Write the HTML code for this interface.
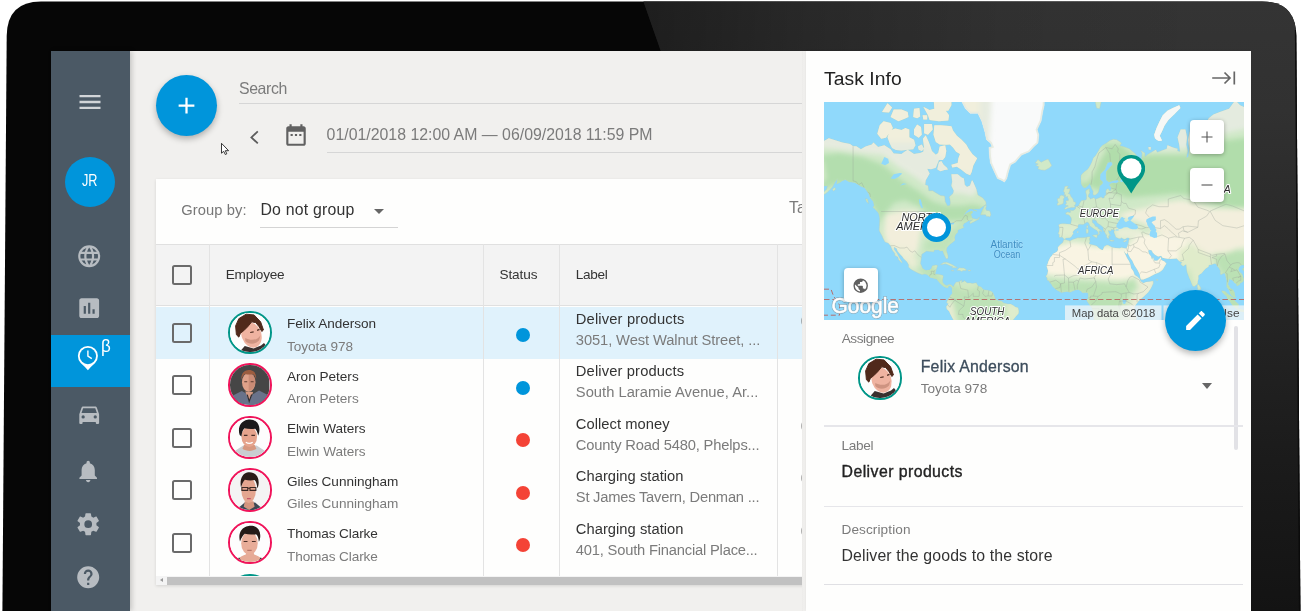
<!DOCTYPE html>
<html lang="en"><head><meta charset="utf-8"><title>Task Info</title>
<style>
html,body{margin:0;padding:0;background:#fff;}
body{width:1303px;height:611px;overflow:hidden;position:relative;font-family:"Liberation Sans",sans-serif;}
.a{position:absolute;}
.t{position:absolute;white-space:nowrap;line-height:1;}
.ic{position:absolute;display:block;}
.cb{position:absolute;width:15.8px;height:15.8px;border:2px solid #6a6a6a;border-radius:2.5px;}
.vl{position:absolute;width:1px;background:#e3e3e3;}
.av{position:absolute;width:39.4px;height:39.4px;border-radius:50%;border:2.500px solid #f0145a;overflow:hidden;background:#fff;}
.av svg{width:100%;height:100%;}
.dot{position:absolute;width:14px;height:14px;border-radius:50%;}
</style></head><body>
<div id="root" style="position:absolute;left:0;top:0;width:1303px;height:611px;overflow:hidden;will-change:transform;">

<svg class="ic" style="left:0;top:0;width:1303px;height:611px" viewBox="0 0 1303 611">
<defs><clipPath id="fr"><path d="M2.400 612L6.700 36Q7 1.400 41 1.400H1262Q1296 1.400 1296.300 36L1300.400 612Z"/></clipPath>
<linearGradient id="gv" x1="0" y1="0" x2="0" y2="1"><stop offset="0" stop-color="#343434"/><stop offset=".18" stop-color="#313131"/><stop offset=".45" stop-color="#272727"/><stop offset=".75" stop-color="#1b1b1b"/><stop offset="1" stop-color="#131313"/></linearGradient>
<linearGradient id="gh" gradientUnits="userSpaceOnUse" x1="643" y1="0" x2="1210" y2="0"><stop offset="0" stop-color="#000" stop-opacity=".42"/><stop offset=".29" stop-color="#000" stop-opacity=".22"/><stop offset=".64" stop-color="#000" stop-opacity=".06"/><stop offset="1" stop-color="#000" stop-opacity="0"/></linearGradient></defs>
<g clip-path="url(#fr)"><rect width="1303" height="612" fill="#060606"/><path d="M643 0H1303V612H857Z" fill="url(#gv)"/><path d="M643 0H1303V612H857Z" fill="url(#gh)"/><path d="M1295.700 30L1299.800 612" stroke="#0b0b0b" stroke-width="1.600" fill="none"/></g></svg>
<div class="a" id="screen" style="left:51px;top:51px;width:1200px;height:560px;background:#f1f0ee;overflow:hidden;">
</div>
<div class="a" style="left:51px;top:51px;width:79px;height:560px;background:#4b5965;box-shadow:2px 0 5px rgba(0,0,0,.18);"></div>
<div class="a" style="left:51px;top:335px;width:79px;height:52px;background:#0095db;"></div>
<svg class="ic" style="left:76.30px;top:87.60px;width:28px;height:28px;opacity:0.75;" viewBox="0 0 24 24"><path fill="#fff" d="M3 6h18v2H3zm0 5h18v2H3zm0 5h18v2H3z"/></svg>
<div class="a" style="left:65px;top:156.500px;width:50px;height:50px;border-radius:50%;background:#0095db;"></div>
<span class="t" id="jr" style="left:82.20px;top:172.67px;font-size:15.86px;color:#fff;letter-spacing:0.000px;transform:scaleX(.8);transform-origin:0 0;">JR</span>
<svg class="ic" style="left:75.90px;top:242.80px;width:26.4px;height:26.4px;opacity:0.6;" viewBox="0 0 24 24"><path fill="#fff" d="M16.36 14c.08-.66.14-1.32.14-2s-.06-1.34-.14-2h3.38c.16.64.26 1.31.26 2s-.1 1.36-.26 2m-5.15 5.56c.6-1.11 1.06-2.31 1.38-3.56h2.95a8.03 8.03 0 0 1-4.33 3.56M14.34 14H9.66c-.1-.66-.16-1.32-.16-2s.06-1.35.16-2h4.68c.09.65.16 1.32.16 2s-.07 1.34-.16 2M12 19.96c-.83-1.2-1.5-2.53-1.91-3.96h3.82c-.41 1.43-1.08 2.76-1.91 3.96M8 8H5.08A7.92 7.92 0 0 1 9.4 4.44C8.8 5.55 8.35 6.75 8 8m-2.92 8H8c.35 1.25.8 2.45 1.4 3.56A8 8 0 0 1 5.08 16m-.82-2C4.1 13.36 4 12.69 4 12s.1-1.36.26-2h3.38c-.08.66-.14 1.32-.14 2s.06 1.34.14 2M12 4.03c.83 1.2 1.5 2.54 1.91 3.97h-3.82c.41-1.43 1.08-2.77 1.91-3.97M18.92 8h-2.95a15.7 15.7 0 0 0-1.38-3.56c1.84.63 3.37 1.9 4.33 3.56M12 2C6.47 2 2 6.5 2 12a10 10 0 0 0 10 10 10 10 0 0 0 10-10A10 10 0 0 0 12 2"/></svg>
<svg class="ic" style="left:75.90px;top:295.20px;width:26.4px;height:26.4px;opacity:0.6;" viewBox="0 0 24 24"><path fill="#fff" d="M19 3H5c-1.1 0-2 .9-2 2v14c0 1.1.9 2 2 2h14c1.1 0 2-.9 2-2V5c0-1.1-.9-2-2-2M9 17H7v-7h2zm4 0h-2V7h2zm4 0h-2v-4h2z"/></svg>
<svg class="ic" style="left:74px;top:342px;width:30px;height:32px" viewBox="0 0 30 32"><path d="M6.700 20.900A10 10 0 1 1 21.100 20.900Q17 24.500 13.900 28.200Q10.800 24.500 6.700 20.900Z" fill="#fff"/><circle cx="13.900" cy="14" r="8.200" fill="#0095db"/><path d="M13.900 8.600v5.600l3.900 2.500" stroke="#fff" stroke-width="1.400" fill="none"/></svg>
<span class="t" id="beta" style="left:101.10px;top:336.68px;font-size:18.33px;color:#fff;letter-spacing:0.000px;transform:scaleX(.93);transform-origin:0 0;">β</span>
<svg class="ic" style="left:75.90px;top:400.60px;width:26.4px;height:26.4px;opacity:0.6;" viewBox="0 0 24 24"><path fill="#fff" d="m5 11 1.5-4.5h11L19 11m-1.5 5a1.5 1.5 0 0 1-1.5-1.5 1.5 1.5 0 0 1 1.5-1.5 1.5 1.5 0 0 1 1.5 1.5 1.5 1.5 0 0 1-1.5 1.5m-11 0A1.5 1.5 0 0 1 5 14.5 1.5 1.5 0 0 1 6.5 13 1.5 1.5 0 0 1 8 14.5 1.5 1.5 0 0 1 6.5 16M18.92 6c-.2-.58-.76-1-1.42-1h-11c-.66 0-1.22.42-1.42 1L3 12v8a1 1 0 0 0 1 1h1a1 1 0 0 0 1-1v-1h12v1a1 1 0 0 0 1 1h1a1 1 0 0 0 1-1v-8z"/></svg>
<svg class="ic" style="left:75.40px;top:458.30px;width:26.4px;height:26.4px;opacity:0.6;" viewBox="0 0 24 24"><path fill="#fff" d="M12 22c1.100 0 2-.9 2-2h-4c0 1.100.89 2 2 2zm6-6v-5c0-3.070-1.640-5.640-4.500-6.320V4c0-.83-.67-1.500-1.500-1.500s-1.500.67-1.500 1.500v.68C7.630 5.360 6 7.920 6 11v5l-2 2v1h16v-1l-2-2z"/></svg>
<svg class="ic" style="left:75.40px;top:511.00px;width:26.4px;height:26.4px;opacity:0.6;" viewBox="0 0 24 24"><path fill="#fff" d="M12 15.5A3.5 3.5 0 0 1 8.5 12 3.5 3.5 0 0 1 12 8.5a3.5 3.5 0 0 1 3.5 3.5 3.5 3.5 0 0 1-3.5 3.5m7.43-2.53c.04-.32.07-.64.07-.97s-.03-.66-.07-1l2.11-1.63c.19-.15.24-.42.12-.64l-2-3.46c-.12-.22-.39-.31-.61-.22l-2.49 1c-.52-.39-1.06-.73-1.69-.98l-.37-2.65A.506.506 0 0 0 14 2h-4c-.25 0-.46.18-.5.42l-.37 2.65c-.63.25-1.17.59-1.69.98l-2.49-1c-.22-.09-.49 0-.61.22l-2 3.46c-.13.22-.07.49.12.64L4.57 11c-.04.34-.07.67-.07 1s.03.65.07.97l-2.11 1.66c-.19.15-.25.42-.12.64l2 3.46c.12.22.39.3.61.22l2.49-1.01c.52.4 1.06.74 1.69.99l.37 2.65c.04.24.25.42.5.42h4c.25 0 .46-.18.5-.42l.37-2.65c.63-.26 1.17-.59 1.69-.99l2.49 1.01c.22.08.49 0 .61-.22l2-3.46c.12-.22.07-.49-.12-.64z"/></svg>
<svg class="ic" style="left:75.40px;top:563.60px;width:26.4px;height:26.4px;opacity:0.6;" viewBox="0 0 24 24"><path fill="#fff" d="m15.07 11.25-.9.92C13.45 12.89 13 13.5 13 15h-2v-.5c0-1.11.45-2.11 1.17-2.83l1.24-1.26c.37-.36.59-.86.59-1.41a2 2 0 0 0-2-2 2 2 0 0 0-2 2H8a4 4 0 0 1 4-4 4 4 0 0 1 4 4 3.2 3.2 0 0 1-.93 2.25M13 19h-2v-2h2M12 2A10 10 0 0 0 2 12a10 10 0 0 0 10 10 10 10 0 0 0 10-10c0-5.53-4.5-10-10-10"/></svg>
<div class="a" style="left:156px;top:75px;width:61px;height:61px;border-radius:50%;background:#0095db;box-shadow:0 3px 6px rgba(0,0,0,.28);"></div>
<svg class="ic" style="left:173.20px;top:92.10px;width:27px;height:27px;opacity:1;" viewBox="0 0 24 24"><path fill="#fff" d="M19 13h-6v6h-2v-6H5v-2h6V5h2v6h6z"/></svg>
<span class="t" id="search" style="left:239.00px;top:81.27px;font-size:15.86px;color:#7b7b7b;letter-spacing:-0.392px;">Search</span>
<div class="a" style="left:239px;top:103px;width:570px;height:1px;background:#d6d6d6;"></div>
<svg class="ic" style="left:246px;top:127px;width:16px;height:21px" viewBox="246 127 16 21"><path d="M257.800 131.400L251.400 137.400L257.800 143.400" fill="none" stroke="#5c5c5c" stroke-width="1.800"/></svg>
<svg class="ic" style="left:282.90px;top:122.40px;width:26px;height:26px;opacity:1;" viewBox="0 0 24 24"><path fill="#616161" d="M9 11H7v2h2v-2zm4 0h-2v2h2v-2zm4 0h-2v2h2v-2zm2-7h-1V2h-2v2H8V2H6v2H5c-1.110 0-1.990.9-1.990 2L3 20c0 1.100.89 2 2 2h14c1.100 0 2-.9 2-2V6c0-1.100-.9-2-2-2zm0 16H5V9h14v11z"/></svg>
<span class="t" id="date" style="left:326.60px;top:126.87px;font-size:15.86px;color:#7b7b7b;letter-spacing:0.001px;">01/01/2018 12:00 AM — 06/09/2018 11:59 PM</span>
<div class="a" style="left:327px;top:152px;width:480px;height:1px;background:#d6d6d6;"></div>
<svg class="ic" style="left:219px;top:141px;width:12px;height:16px" viewBox="219 141 12 16"><path d="M221.500 143.300V153.200L223.700 151.300L225.300 154.500L226.800 153.800L225.300 150.700H228.600Z" fill="#fff" stroke="#222" stroke-width=".9" stroke-linejoin="round"/></svg>
<div class="a" style="left:156px;top:178.500px;width:650px;height:406px;background:#fefefd;box-shadow:0 1px 3px rgba(0,0,0,.12);"></div>
<span class="t" id="groupby" style="left:181.30px;top:203.03px;font-size:14.73px;color:#777;letter-spacing:0.071px;">Group by:</span>
<span class="t" id="dng" style="left:260.40px;top:202.07px;font-size:15.86px;color:#333;letter-spacing:0.210px;">Do not group</span>
<svg class="ic" style="left:367.00px;top:198.50px;width:24px;height:24px;opacity:1;" viewBox="0 0 24 24"><path fill="#666" d="m7 10 5 5 5-5z"/></svg>
<div class="a" style="left:260px;top:226.500px;width:138px;height:1px;background:#d4d4d4;"></div>
<span class="t" id="ta" style="left:789.00px;top:200.47px;font-size:15.86px;color:#7b7b7b;letter-spacing:0.000px;">Ta</span>
<div class="a" style="left:156px;top:243.500px;width:650px;height:62.500px;background:#f3f3f3;border-top:1px solid #e0e0e0;border-bottom:1px solid #e0e0e0;box-sizing:border-box;"></div>
<div class="a" style="left:156px;top:306.500px;width:650px;height:52.500px;background:#e0f2fc;"></div>
<div class="vl" style="left:208.7px;top:244px;height:332px;"></div>
<div class="vl" style="left:483.3px;top:244px;height:332px;"></div>
<div class="vl" style="left:558.9px;top:244px;height:332px;"></div>
<div class="vl" style="left:777.2px;top:244px;height:332px;"></div>
<div class="cb" style="left:172.200px;top:265px;"></div>
<span class="t" id="h_emp" style="left:225.70px;top:267.79px;font-size:13.6px;color:#333;letter-spacing:-0.208px;">Employee</span>
<span class="t" id="h_status" style="left:499.50px;top:267.79px;font-size:13.6px;color:#333;letter-spacing:-0.110px;">Status</span>
<span class="t" id="h_label" style="left:575.70px;top:267.79px;font-size:13.6px;color:#333;letter-spacing:-0.315px;">Label</span>
<div class="cb" style="left:172.200px;top:322.80px;"></div>
<div class="av" style="left:228.300px;top:310.90px;border-color:#009688;"><svg viewBox="0 0 40 40" width="40" height="40" style="position:absolute;left:0;top:0"><rect width="40" height="40" fill="#fdfdfd"/><path d="M11 38L15 33.500L24 36L31.500 33L34.500 30.500L37 33.500L31 41H15Z" fill="#3a302f"/><ellipse cx="21.800" cy="22.300" rx="10" ry="13.200" transform="rotate(-20 21.800 22.300)" fill="#efb3a1"/><path d="M15.500 28.500C19 32 25 32.500 29.500 28L31 22.500C28.500 27 22 29 15.500 25.500Z" fill="#c08673" opacity=".7"/><path d="M6.500 22.100L5.700 13.100L9 5.700L16.400 1.200L24.500 2L31.100 9L34 17.200L32.300 18.800L29.500 13.900L26.200 9.800L22.100 9L18 13.900L13.900 18L10.600 20.500L9 24.500Z" fill="#50291b" stroke="#50291b" stroke-width="1" stroke-linejoin="round"/><path d="M20.500 19.800L24 19.200M27.500 17.600L30 16.600" stroke="#4e2d22" stroke-width="1.200"/></svg>
</div>
<span class="t" id="n1_0" style="left:287.00px;top:317.49px;font-size:13.6px;color:#333;letter-spacing:-0.072px;">Felix Anderson</span>
<span class="t" id="n2_0" style="left:287.00px;top:339.99px;font-size:13.6px;color:#7b7b7b;letter-spacing:-0.058px;">Toyota 978</span>
<div class="dot" style="left:516.400px;top:328.20px;background:#0095db;"></div>
<span class="t" id="l1_0" style="left:575.80px;top:311.73px;font-size:14.73px;color:#333;letter-spacing:0.150px;">Deliver products</span>
<span class="t" id="l2_0" style="left:575.80px;top:332.83px;font-size:14.73px;color:#7b7b7b;letter-spacing:-0.102px;">3051, West Walnut Street, ...</span>
<span class="t" id="par_0" style="left:800.50px;top:312.83px;font-size:14.73px;color:#7b7b7b;letter-spacing:0.000px;">(</span>
<div class="cb" style="left:172.200px;top:375.30px;"></div>
<div class="av" style="left:228.300px;top:363.40px;border-color:#f0145a;">
<svg viewBox="0 0 40 40" width="40" height="40" style="position:absolute;left:0;top:0"><rect width="40" height="40" fill="#464646"/><path d="M3 31l9-4.500 4.500 2.500 3 7 4-6.500 6-3.500 8 4v11H3z" fill="#69728a"/><path d="M15.500 27l8 .5-4 10z" fill="#d59a83"/><path d="M17.500 30l2 7 2.500-7" fill="none" stroke="#2c2c33" stroke-width="1.200"/><ellipse cx="19" cy="17.500" rx="6.800" ry="9.600" fill="#dfa189"/><path d="M19 8v18c3.500 0 6.800-4 6.800-9S23 8 19 8z" fill="#b97c66" opacity=".55"/><path d="M11.600 15c-.6-5 2-9.500 7.500-9.800 5-.2 8 3.500 7.400 9.300-.6-2.500-1.600-4.300-3.200-5.200-2.400.6-5.500.5-8.200-.2-1.700 1.300-2.800 3.200-3.500 5.900z" fill="#9c5d40"/><path d="M14.500 17h3M21 17h3" stroke="#5b3a30" stroke-width="1"/></svg>
</div>
<span class="t" id="n1_1" style="left:287.00px;top:369.99px;font-size:13.6px;color:#333;letter-spacing:-0.009px;">Aron Peters</span>
<span class="t" id="n2_1" style="left:287.00px;top:392.49px;font-size:13.6px;color:#7b7b7b;letter-spacing:-0.009px;">Aron Peters</span>
<div class="dot" style="left:516.400px;top:380.70px;background:#0095db;"></div>
<span class="t" id="l1_1" style="left:575.80px;top:364.23px;font-size:14.73px;color:#333;letter-spacing:0.136px;">Deliver products</span>
<span class="t" id="l2_1" style="left:575.80px;top:385.33px;font-size:14.73px;color:#7b7b7b;letter-spacing:0.015px;">South Laramie Avenue, Ar...</span>
<div class="cb" style="left:172.200px;top:427.80px;"></div>
<div class="av" style="left:228.300px;top:415.90px;border-color:#f0145a;">
<svg viewBox="0 0 40 40" width="40" height="40" style="position:absolute;left:0;top:0"><rect width="40" height="40" fill="#fdfdfd"/><path d="M4 34l9.500-6h13.500l9.500 6v7H4z" fill="#c9cdd1"/><g transform="translate(20 20) scale(1.13) translate(-20 -19.5)"><path d="M15 26h9.500l1.500 3.500c-3 2.500-9 2.500-12.500 0z" fill="#d79880"/><ellipse cx="19.600" cy="18.600" rx="7" ry="9.300" fill="#e6a48d"/><path d="M11 17c-2-6 .5-12.500 7-13.700 6.500-1.200 11.500 3 10.700 10.200-.2 1.800-.6 3.300-1.200 4.200-.3-2.800-1.200-5-2.600-6.300-3 .6-6.500.4-9.500-.4-1.500 1.300-2.500 3.600-2.800 7.500z" fill="#1b1a1b"/><path d="M14.800 17.400h3.200M21.500 17.400h3.200" stroke="#4a2f28" stroke-width="1"/><path d="M16.500 23.500c2 1.300 4.200 1.300 6.200 0" stroke="#fff" stroke-width="1.100" fill="none"/></g></svg>
</div>
<span class="t" id="n1_2" style="left:287.00px;top:422.49px;font-size:13.6px;color:#333;letter-spacing:-0.020px;">Elwin Waters</span>
<span class="t" id="n2_2" style="left:287.00px;top:444.99px;font-size:13.6px;color:#7b7b7b;letter-spacing:-0.020px;">Elwin Waters</span>
<div class="dot" style="left:516.400px;top:433.20px;background:#f44336;"></div>
<span class="t" id="l1_2" style="left:575.80px;top:416.73px;font-size:14.73px;color:#333;letter-spacing:0.036px;">Collect money</span>
<span class="t" id="l2_2" style="left:575.80px;top:437.83px;font-size:14.73px;color:#7b7b7b;letter-spacing:-0.173px;">County Road 5480, Phelps...</span>
<span class="t" id="par_2" style="left:800.50px;top:417.83px;font-size:14.73px;color:#7b7b7b;letter-spacing:0.000px;">(</span>
<div class="cb" style="left:172.200px;top:480.30px;"></div>
<div class="av" style="left:228.300px;top:468.40px;border-color:#f0145a;">
<svg viewBox="0 0 40 40" width="40" height="40" style="position:absolute;left:0;top:0"><rect width="40" height="40" fill="#f4f4f4"/><path d="M9 38l6-5h10.500l6 5v3H9z" fill="#3c4854"/><g transform="translate(20 20) scale(1.1) translate(-20 -19.3)"><path d="M15.500 30h8l1 5-5 3-5-3z" fill="#d3957f"/><ellipse cx="19" cy="19.500" rx="6.700" ry="12" fill="#e4a690"/><path d="M12 17.500c-1.500-7 1-13.500 6.500-14.300 6-.8 10.500 3.600 9.700 11-.2 1.700-.6 3-1.200 3.800-.2-3.500-1-6.300-2.500-7.600-3 .5-6 .4-9-.3-1.500 1.500-2.500 3.800-3.500 7.400z" fill="#2a1c17"/><path d="M12.800 17.300h5.400v2.600h-5.400zM20.300 17.300h5.400v2.600h-5.400zM18.200 18h2.100" stroke="#3b2a25" stroke-width="1" fill="none"/><path d="M17.500 27.500h3.500" stroke="#c4566a" stroke-width="1.100"/></g></svg>
</div>
<span class="t" id="n1_3" style="left:287.00px;top:474.99px;font-size:13.6px;color:#333;letter-spacing:-0.029px;">Giles Cunningham</span>
<span class="t" id="n2_3" style="left:287.00px;top:497.49px;font-size:13.6px;color:#7b7b7b;letter-spacing:-0.029px;">Giles Cunningham</span>
<div class="dot" style="left:516.400px;top:485.70px;background:#f44336;"></div>
<span class="t" id="l1_3" style="left:575.80px;top:469.23px;font-size:14.73px;color:#333;letter-spacing:0.034px;">Charging station</span>
<span class="t" id="l2_3" style="left:575.80px;top:490.33px;font-size:14.73px;color:#7b7b7b;letter-spacing:-0.224px;">St James Tavern, Denman ...</span>
<span class="t" id="par_3" style="left:800.50px;top:470.33px;font-size:14.73px;color:#7b7b7b;letter-spacing:0.000px;">(</span>
<div class="cb" style="left:172.200px;top:532.80px;"></div>
<div class="av" style="left:228.300px;top:520.90px;border-color:#f0145a;">
<svg viewBox="0 0 40 40" width="40" height="40" style="position:absolute;left:0;top:0"><rect width="40" height="40" fill="#fdfdfd"/><path d="M8 37c2-3 5.500-4 8-5l1-4h6.500l1 4c2.500 1 6 2 8 5l-3 4H11z" fill="#e6ab97"/><path d="M8.500 35.500l3.500 5M32 35.500l-3.500 5" stroke="#27201f" stroke-width="1.800"/><g transform="translate(20 20) scale(1.12) translate(-20 -19.5)"><ellipse cx="19.800" cy="20" rx="7.500" ry="10.300" fill="#e8ad99"/><path d="M11.200 18.500c-1.700-6.500.3-13 7.800-14.200 7-1 11.300 3.400 10.500 10.500-.2 1.700-.6 3-1.200 3.800-.2-3-1-5.500-2.500-6.800-3.400.5-7 .4-10.300-.3-1.600 1.300-2.900 3.500-4.300 7z" fill="#241a17"/><path d="M14.500 18.400h3.500M22 18.400h3.500" stroke="#4a2f28" stroke-width="1.100"/><path d="M17.800 26.500h4" stroke="#b9776a" stroke-width="1"/></g></svg>
</div>
<span class="t" id="n1_4" style="left:287.00px;top:527.49px;font-size:13.6px;color:#333;letter-spacing:-0.114px;">Thomas Clarke</span>
<span class="t" id="n2_4" style="left:287.00px;top:549.99px;font-size:13.6px;color:#7b7b7b;letter-spacing:-0.114px;">Thomas Clarke</span>
<div class="dot" style="left:516.400px;top:538.20px;background:#f44336;"></div>
<span class="t" id="l1_4" style="left:575.80px;top:521.73px;font-size:14.73px;color:#333;letter-spacing:0.034px;">Charging station</span>
<span class="t" id="l2_4" style="left:575.80px;top:542.83px;font-size:14.73px;color:#7b7b7b;letter-spacing:-0.195px;">401, South Financial Place...</span>
<span class="t" id="par_4" style="left:800.50px;top:522.83px;font-size:14.73px;color:#7b7b7b;letter-spacing:0.000px;">(</span>
<div class="a" style="left:156px;top:569px;width:650px;height:7px;overflow:hidden;"><div class="av" style="left:72.200px;top:4.500px;border-color:#009688;"></div></div>
<div class="a" style="left:156px;top:576px;width:650px;height:9px;background:#f4f4f4;"></div>
<div class="a" style="left:167px;top:576.500px;width:640px;height:8px;background:#c1c1c1;"></div>
<div class="a" style="left:159.500px;top:578px;width:0;height:0;border:2.500px solid transparent;border-right:3.500px solid #999;border-left:0;"></div>
<div class="a" style="left:802px;top:51px;width:6px;height:560px;background:linear-gradient(90deg,#ecebe9,#f3f2f0 2px);"></div>
<div class="a" id="panel" style="left:806px;top:51px;width:445px;height:560px;background:#fefefd;box-shadow:-1px 0 3px rgba(0,0,0,.05);"></div>
<span class="t" id="taskinfo" style="left:824.00px;top:69.30px;font-size:19.26px;color:#222;letter-spacing:0.082px;">Task Info</span>
<svg class="ic" style="left:1211px;top:70px;width:26px;height:16px" viewBox="0 0 26 16"><path d="M1.200 8H19M13.500 2.500 19 8l-5.500 5.500M23.300 1.600v12.800" stroke="#666" stroke-width="1.700" fill="none"/></svg>
<div class="a" id="map" style="left:824px;top:102px;width:419.500px;height:218px;background:#90d9fb;overflow:hidden;"><svg width="419.5" height="218" viewBox="0 0 419.5 218" style="position:absolute;left:0;top:0;font-family:'Liberation Sans',sans-serif">
<defs><clipPath id="lc"><path d="M418.7 166.8 L420.1 165.6 L422.3 166.0 L421.5 167.6 L419.9 168.6 L418.7 168.1Z M413.2 208.1 L414.6 206.7 L418.4 207.7 L421.5 208.3 L423.8 208.3 L423.8 210.5 L418.4 209.7 L415.1 209.1Z M-13.0 60.6 L-10.6 49.8 L-5.2 44.6 L-3.5 41.0 L4.8 36.2 L12.0 38.6 L18.2 40.5 L26.0 41.9 L29.1 44.2 L32.3 44.2 L36.9 47.2 L41.6 44.6 L47.9 42.4 L49.4 40.5 L54.1 45.1 L60.3 43.3 L66.6 47.2 L69.7 51.5 L77.5 51.9 L80.6 49.8 L83.7 47.7 L90.0 51.9 L96.2 51.1 L99.3 49.8 L100.1 45.5 L98.9 36.7 L101.7 33.3 L104.8 40.0 L106.4 44.6 L107.9 49.0 L111.8 52.7 L114.2 51.1 L115.7 44.6 L121.2 43.3 L122.3 49.0 L121.2 55.1 L118.8 57.9 L114.9 57.9 L113.4 61.7 L111.8 65.7 L107.1 67.2 L103.2 66.8 L105.6 71.6 L101.7 78.2 L101.2 82.8 L104.0 83.7 L104.8 88.7 L108.7 88.7 L111.8 90.7 L116.5 93.5 L120.7 94.0 L121.2 99.6 L123.5 103.9 L125.9 103.4 L126.3 100.9 L125.9 97.0 L125.1 94.9 L129.0 91.6 L129.8 88.7 L127.4 83.7 L128.2 79.8 L127.4 72.3 L133.7 72.3 L137.6 75.6 L139.9 76.6 L140.7 82.8 L143.0 84.9 L146.1 83.4 L147.7 78.8 L148.5 78.5 L152.4 87.3 L153.9 92.9 L158.6 95.7 L161.7 99.6 L162.2 102.2 L160.2 103.7 L155.5 106.7 L149.3 106.7 L145.4 106.7 L142.2 109.5 L139.1 114.2 L143.0 111.0 L147.7 109.1 L148.8 110.0 L146.9 112.4 L148.0 116.0 L150.0 116.7 L153.2 117.2 L155.5 115.1 L154.7 117.2 L150.0 119.8 L146.1 121.8 L145.8 119.8 L148.5 117.8 L144.6 118.7 L142.2 120.2 L139.9 121.5 L138.8 123.7 L139.9 125.6 L137.6 126.4 L133.7 128.1 L133.7 130.3 L131.6 132.3 L130.5 135.3 L131.0 138.2 L129.0 140.1 L125.9 142.3 L122.7 145.7 L122.3 148.4 L124.0 153.7 L124.0 156.3 L122.7 157.0 L121.5 155.5 L119.9 152.0 L118.8 148.8 L116.5 148.9 L114.2 147.7 L110.3 147.9 L109.8 149.8 L107.1 149.6 L102.5 149.1 L97.8 152.3 L97.3 156.3 L96.5 161.5 L98.6 166.5 L101.7 168.6 L105.6 168.0 L107.6 166.5 L108.1 164.0 L111.8 163.0 L113.7 163.5 L112.6 166.5 L111.8 168.9 L111.0 172.2 L114.9 172.4 L118.8 173.3 L119.3 174.6 L118.5 177.8 L118.5 180.2 L120.4 182.6 L122.7 183.7 L125.1 182.6 L127.4 182.9 L128.5 184.2 L129.3 185.0 L131.3 181.0 L132.4 180.1 L135.2 179.8 L137.6 178.0 L137.9 179.4 L137.1 180.4 L139.9 179.4 L139.9 178.5 L142.2 179.9 L143.0 181.0 L146.1 180.9 L148.5 181.5 L152.4 180.7 L152.7 181.8 L154.3 184.2 L157.1 185.0 L159.4 187.7 L163.3 188.3 L167.2 189.2 L168.8 190.8 L170.6 194.7 L171.1 196.7 L172.7 197.8 L173.9 198.7 L177.3 199.1 L179.7 201.1 L183.6 201.9 L186.7 202.0 L189.0 203.3 L191.4 205.0 L194.0 205.8 L194.8 208.9 L194.5 211.6 L192.2 214.1 L190.6 216.0 L189.0 218.0 L188.3 229.4 L130.5 229.4 L130.1 218.8 L128.7 216.4 L126.6 212.4 L125.1 209.2 L122.7 206.9 L122.3 204.5 L123.8 202.8 L124.3 201.4 L122.7 200.9 L123.1 199.1 L124.3 196.7 L125.9 195.2 L126.6 193.6 L128.5 191.6 L128.2 188.9 L128.2 186.1 L126.6 184.2 L124.8 183.7 L123.8 185.9 L122.0 185.4 L119.6 184.5 L116.5 181.8 L115.3 180.2 L112.6 177.0 L109.5 176.2 L106.4 175.4 L103.2 172.5 L100.9 172.0 L97.8 172.5 L93.9 171.1 L90.0 168.9 L86.9 167.3 L84.5 165.0 L84.8 163.1 L83.0 159.8 L79.8 156.7 L78.3 154.6 L75.9 152.0 L73.6 149.3 L72.5 146.2 L70.0 145.1 L70.2 147.5 L72.8 151.1 L75.2 155.5 L77.0 158.6 L78.3 160.3 L77.5 160.8 L74.4 157.5 L73.9 155.1 L70.8 153.4 L70.9 151.6 L68.5 148.4 L66.6 143.8 L64.2 141.0 L61.0 139.9 L58.9 136.1 L58.0 133.7 L56.0 130.3 L55.2 128.5 L55.3 125.2 L55.7 119.8 L55.7 115.8 L54.6 111.0 L52.5 108.8 L49.0 105.2 L50.2 103.4 L49.4 99.6 L46.3 95.7 L44.7 91.6 L40.8 85.8 L36.9 84.3 L34.6 82.8 L30.7 80.4 L25.2 79.8 L21.3 77.6 L18.2 78.8 L15.9 80.4 L12.8 81.9 L13.5 76.6 L11.2 79.8 L9.6 82.8 L8.5 84.9 L5.0 88.7 L1.8 91.6 L-2.1 93.5 L-5.2 94.9 L-8.0 95.4 L-3.6 92.1 L-0.5 90.2 L2.6 87.3 L3.7 83.7 L1.1 84.0 L-3.6 83.7 L-3.6 79.8 L-8.3 77.2 L-9.9 74.0 L-8.3 70.6 L-5.2 69.3 L-2.1 67.5 L-2.1 64.7 L-5.2 64.3 L-9.9 64.7Z M211.2 61.0 L214.0 57.5 L217.1 60.2 L221.0 58.3 L224.1 57.1 L226.3 61.0 L227.7 63.6 L225.7 65.7 L221.0 68.2 L217.1 67.9 L213.8 66.8 L214.8 64.7 L211.7 63.2 L214.3 62.1Z M116.5 162.5 L119.6 160.6 L122.7 160.3 L125.9 161.5 L129.0 163.1 L131.3 164.5 L133.3 165.3 L132.1 165.8 L127.9 165.8 L128.7 164.6 L126.6 164.0 L123.5 162.6 L121.2 161.8 L118.1 162.6Z M133.0 168.3 L135.2 165.8 L137.2 166.0 L139.9 166.1 L142.4 167.8 L141.9 168.6 L139.1 168.6 L137.6 169.4 L136.0 168.6Z M127.0 168.3 L130.1 168.6 L129.0 169.3Z M144.3 168.1 L146.8 168.3 L146.1 169.0 L144.3 168.9Z M153.2 56.3 L149.3 63.6 L147.7 69.9 L146.1 73.3 L142.2 71.6 L136.8 67.2 L132.9 64.7 L128.2 65.4 L127.4 62.8 L133.7 61.0 L134.4 56.3 L136.0 51.9 L132.1 49.8 L129.0 45.5 L125.9 42.4 L122.0 42.8 L115.7 42.4 L111.8 40.0 L109.5 32.8 L110.3 23.2 L116.5 23.2 L122.7 23.8 L127.4 24.3 L129.0 28.6 L132.9 33.8 L137.6 37.7 L142.2 42.4 L144.6 46.8 L148.5 52.3Z M65.8 41.4 L63.5 35.3 L65.8 28.6 L71.3 26.5 L77.5 28.1 L81.4 26.0 L85.3 27.6 L85.3 35.3 L90.0 37.7 L91.5 43.3 L89.2 47.2 L83.7 47.7 L77.5 48.5 L72.0 48.1 L68.1 45.9Z M57.2 36.7 L53.3 31.7 L55.7 23.2 L59.6 19.2 L66.6 20.9 L68.9 26.0 L65.0 31.2 L61.9 35.7Z M66.6 15.0 L69.7 7.4 L77.5 7.4 L83.7 10.0 L84.5 15.0 L80.6 16.8 L74.4 19.2 L71.3 17.4Z M90.0 32.8 L90.0 27.6 L93.1 22.6 L97.0 24.9 L97.8 32.8 L94.7 35.7Z M100.1 22.1 L107.9 22.1 L108.7 27.6 L104.0 32.8 L100.1 31.2Z M93.9 44.6 L97.8 42.4 L100.1 46.8 L97.8 49.0 L94.7 47.7Z M105.6 18.0 L114.9 19.2 L124.3 18.6 L125.1 13.2 L121.2 8.0 L110.3 6.7 L105.6 8.0 L99.3 4.7 L104.0 13.2Z M89.2 15.0 L90.0 6.7 L95.4 6.0 L96.2 14.4 L93.1 16.2Z M98.6 13.2 L103.2 13.2 L103.2 17.4 L99.3 17.4Z M110.3 6.7 L124.3 8.7 L127.4 3.3 L127.4 -66.1 L105.6 -66.1Z M58.0 10.0 L63.5 1.2 L68.1 5.4 L65.0 10.6Z M113.4 66.4 L114.9 60.2 L117.3 59.1 L119.6 62.8 L122.7 65.4 L124.0 67.5 L120.4 67.9 L116.5 69.3 L113.4 67.5Z M156.6 112.8 L157.8 109.5 L158.9 107.1 L160.5 103.7 L162.5 103.2 L161.7 106.7 L162.5 108.4 L165.6 108.8 L166.4 110.7 L166.9 113.1 L165.6 115.1 L164.1 114.2 L162.5 114.4 L161.7 112.8Z M8.1 87.6 L10.4 85.5 L12.0 87.0 L9.6 89.0Z M41.6 96.7 L43.6 97.0 L44.4 101.4 L42.4 99.6Z M148.5 107.4 L152.4 108.6 L152.7 109.3 L149.3 108.1Z M289.3 37.2 L292.8 37.7 L297.5 41.0 L295.9 43.7 L300.6 45.1 L305.3 46.8 L311.5 51.9 L313.1 55.1 L311.5 58.3 L303.7 57.1 L299.8 55.1 L302.9 62.8 L303.7 65.4 L306.8 66.4 L308.4 63.6 L311.5 63.9 L311.5 59.1 L314.6 57.1 L317.7 58.3 L318.1 51.1 L316.6 48.5 L320.9 51.1 L320.9 55.1 L324.0 52.3 L331.8 47.7 L333.3 50.2 L338.0 48.5 L342.7 46.8 L343.5 43.3 L348.9 45.5 L353.6 46.8 L353.6 49.0 L356.0 49.4 L355.2 42.4 L353.6 35.3 L356.7 27.6 L361.4 27.6 L363.0 35.3 L362.2 42.4 L363.8 49.0 L362.2 55.9 L364.5 55.1 L365.3 46.8 L364.2 37.7 L366.1 28.6 L370.8 31.2 L373.9 24.9 L375.5 32.8 L377.0 37.7 L380.1 24.9 L384.8 16.2 L389.5 12.5 L397.3 9.4 L405.1 6.7 L411.3 -1.7 L416.0 3.3 L423.8 6.7 L444.1 10.0 L444.1 197.5 L423.8 163.1 L421.2 163.5 L420.7 165.1 L420.1 163.1 L417.6 163.0 L415.6 164.3 L414.1 167.3 L415.2 169.8 L418.0 172.2 L419.6 177.0 L419.1 179.4 L416.0 181.2 L415.6 182.6 L412.9 184.0 L412.6 181.8 L410.6 180.9 L409.0 178.6 L406.7 177.5 L405.9 176.2 L405.1 177.8 L404.3 180.2 L403.9 182.6 L405.1 184.2 L405.9 186.2 L407.4 186.9 L409.0 188.1 L410.4 190.5 L410.6 193.1 L411.7 195.3 L410.6 195.5 L409.0 194.4 L407.1 193.0 L405.9 190.5 L405.6 188.9 L404.6 187.3 L402.8 185.0 L402.8 181.8 L402.9 178.6 L402.0 175.4 L401.4 172.2 L400.4 170.9 L398.9 171.4 L397.8 172.5 L396.2 172.2 L396.5 168.9 L395.0 166.0 L393.1 164.0 L392.3 161.8 L390.3 161.5 L387.9 162.6 L384.8 163.1 L384.5 164.8 L381.7 166.5 L379.4 168.9 L377.5 171.2 L375.5 172.5 L374.2 173.8 L374.4 176.7 L373.6 179.4 L373.6 181.3 L372.3 182.9 L371.1 183.7 L370.0 184.8 L368.4 183.4 L366.9 179.4 L365.8 177.0 L364.5 173.8 L363.0 169.8 L362.7 167.3 L362.5 164.0 L362.2 162.3 L359.1 164.3 L356.7 162.0 L358.3 160.6 L356.0 159.8 L354.1 158.1 L352.8 156.5 L348.9 156.8 L345.0 157.0 L340.8 156.3 L338.5 155.8 L337.2 153.7 L334.1 154.4 L331.0 152.8 L328.7 150.5 L327.9 148.4 L325.5 147.7 L324.0 148.8 L325.2 152.3 L327.1 154.6 L327.4 156.3 L328.3 157.7 L329.0 155.3 L329.6 157.2 L329.4 158.4 L331.0 158.7 L333.3 158.7 L335.4 156.7 L336.9 154.9 L337.2 158.1 L340.4 159.6 L342.4 161.5 L340.4 164.8 L339.1 167.3 L337.2 168.9 L334.9 170.6 L330.5 172.2 L325.5 175.0 L319.3 177.4 L317.0 177.5 L316.2 175.4 L315.7 172.2 L313.5 168.1 L310.3 163.1 L308.4 158.7 L306.0 155.5 L304.8 153.2 L303.7 151.1 L303.7 149.3 L302.6 152.3 L300.9 150.5 L299.8 148.4 L300.3 150.5 L301.8 153.4 L302.6 155.3 L303.7 157.2 L304.9 158.9 L306.2 162.0 L307.1 166.3 L309.2 168.9 L310.7 172.9 L313.1 174.6 L315.7 177.0 L316.5 179.3 L319.3 181.2 L322.4 179.9 L325.5 179.8 L329.1 179.0 L329.3 181.2 L327.9 184.2 L326.3 187.3 L324.0 190.5 L319.8 194.4 L317.0 197.0 L314.6 199.1 L313.1 201.1 L311.0 203.7 L310.3 205.3 L310.4 208.1 L310.7 210.8 L312.0 213.7 L312.4 214.3 L312.3 218.0 L312.6 229.4 L268.6 229.4 L270.0 217.3 L269.7 211.3 L268.3 206.9 L267.5 205.0 L265.6 202.8 L262.7 198.4 L263.8 196.9 L264.2 195.9 L264.4 194.5 L264.4 192.8 L264.2 191.3 L263.0 190.5 L262.0 190.5 L258.5 190.8 L256.9 188.9 L254.4 187.5 L251.0 188.0 L248.8 188.9 L246.0 190.2 L242.9 189.4 L237.4 190.6 L232.3 187.7 L228.5 184.2 L227.7 182.6 L225.7 180.2 L224.8 178.8 L223.0 178.0 L223.2 176.2 L221.8 174.3 L223.4 172.2 L224.1 168.8 L222.6 164.3 L223.8 161.5 L224.3 159.4 L226.5 155.3 L228.2 153.4 L229.0 152.1 L233.2 149.5 L234.1 147.7 L233.8 145.7 L234.7 144.2 L237.2 141.8 L238.5 141.0 L239.9 137.6 L240.8 137.4 L244.4 138.6 L246.0 138.9 L248.2 137.8 L253.8 135.7 L256.9 135.7 L261.3 135.5 L264.5 134.7 L266.3 135.1 L265.6 136.4 L265.6 137.6 L265.9 139.7 L264.9 141.2 L266.4 142.5 L269.7 143.1 L272.7 144.0 L275.0 146.2 L277.2 147.7 L278.9 147.9 L280.3 144.6 L282.8 143.1 L284.4 143.3 L286.5 144.6 L288.4 145.5 L291.5 145.9 L295.7 146.2 L297.5 145.5 L299.5 146.0 L301.8 146.4 L302.6 145.9 L303.4 144.6 L303.7 143.3 L304.5 141.2 L304.9 138.2 L305.6 136.1 L303.1 135.7 L301.7 136.8 L300.3 137.2 L297.0 135.5 L296.7 136.6 L294.7 136.6 L293.2 135.7 L291.8 135.3 L290.9 132.5 L290.0 130.7 L290.0 129.1 L290.9 128.1 L289.7 127.7 L287.2 127.5 L287.0 129.1 L285.4 128.9 L284.8 128.3 L284.4 129.3 L285.0 130.7 L285.4 132.1 L286.5 133.3 L286.5 133.9 L285.8 133.3 L285.0 133.5 L285.3 134.7 L284.5 134.3 L285.1 136.3 L284.0 136.4 L283.0 135.7 L282.3 133.9 L283.0 132.9 L281.9 132.7 L281.4 131.5 L280.6 130.1 L279.4 128.5 L279.4 126.4 L279.2 125.4 L278.0 124.3 L276.4 123.0 L274.7 122.0 L272.8 120.5 L272.3 118.7 L271.4 118.0 L270.8 119.1 L270.3 117.6 L268.3 117.8 L268.4 120.5 L270.3 122.0 L271.3 124.3 L274.1 125.4 L273.9 126.2 L275.6 127.2 L278.0 129.1 L277.6 129.7 L275.9 128.5 L275.0 129.9 L275.8 131.3 L274.8 132.5 L273.6 133.5 L273.6 132.9 L274.4 131.3 L274.1 130.3 L273.4 129.3 L272.2 128.1 L271.3 127.7 L269.4 126.6 L268.1 125.6 L266.3 124.3 L265.5 123.3 L265.2 122.0 L264.4 120.7 L263.0 120.0 L261.6 121.1 L260.6 121.5 L259.4 122.6 L257.5 122.4 L256.4 122.2 L254.6 122.4 L253.8 124.1 L254.1 125.4 L252.5 126.4 L250.5 127.7 L249.1 129.5 L248.6 130.3 L249.4 131.7 L248.3 132.7 L247.9 134.1 L246.0 135.7 L242.2 135.9 L240.7 137.0 L240.4 137.2 L239.3 136.3 L238.2 134.9 L236.8 135.3 L235.2 135.3 L235.4 132.5 L234.3 131.7 L235.1 129.3 L235.5 126.8 L235.2 124.7 L234.6 123.0 L236.2 122.0 L238.2 121.8 L240.2 121.8 L243.2 122.0 L246.3 122.2 L246.8 121.8 L247.2 119.4 L247.4 117.4 L247.2 116.0 L245.7 113.8 L244.4 112.8 L242.2 112.4 L241.6 111.0 L243.6 110.0 L246.0 110.5 L246.6 110.3 L246.1 107.9 L247.2 108.6 L249.3 108.4 L251.4 106.9 L251.6 104.9 L253.0 104.4 L254.6 103.7 L255.3 102.2 L256.4 99.9 L257.7 98.6 L260.0 98.3 L261.7 98.1 L262.5 97.0 L262.5 92.9 L261.7 90.2 L261.9 88.4 L264.5 87.0 L265.6 86.7 L265.5 90.2 L266.1 90.4 L265.0 92.1 L264.2 93.8 L264.5 94.9 L266.1 95.9 L266.1 97.1 L268.0 96.5 L270.0 95.4 L271.4 97.3 L274.1 96.2 L277.2 94.9 L278.3 95.9 L280.1 95.9 L280.3 94.6 L282.0 92.4 L281.9 89.3 L282.6 87.3 L284.4 86.7 L285.3 88.4 L286.5 88.7 L287.2 85.2 L285.8 83.7 L285.8 82.2 L287.6 81.3 L289.7 81.0 L292.8 81.3 L294.3 80.1 L296.2 80.1 L294.3 79.1 L293.9 77.9 L291.2 78.2 L288.1 79.1 L285.0 80.1 L282.6 78.2 L282.3 75.0 L282.2 71.6 L282.6 69.3 L284.5 67.2 L286.5 64.7 L288.7 62.8 L288.1 60.6 L286.9 59.8 L283.7 60.6 L282.3 63.6 L280.8 67.5 L278.3 69.9 L276.2 72.3 L275.9 77.6 L278.3 79.5 L278.6 81.0 L278.0 81.9 L275.6 84.0 L275.2 86.4 L274.7 89.6 L273.7 91.3 L271.4 92.9 L269.4 93.2 L268.9 91.6 L269.2 89.6 L267.8 86.7 L266.6 83.4 L265.8 81.9 L265.6 80.1 L265.0 82.5 L262.8 84.6 L261.6 85.5 L260.0 85.8 L258.0 83.4 L257.2 81.3 L257.1 78.5 L256.9 75.9 L257.1 73.3 L258.8 71.3 L260.8 69.6 L263.9 67.2 L266.3 63.6 L268.1 59.8 L269.4 55.9 L271.4 53.9 L273.3 51.1 L274.8 48.5 L276.4 45.5 L278.7 43.3 L281.9 41.4 L285.8 38.6Z M240.2 106.9 L242.1 104.7 L244.4 104.2 L244.1 103.7 L241.0 102.9 L242.7 100.9 L241.8 100.1 L242.2 98.6 L244.4 98.6 L244.4 97.0 L243.5 95.7 L243.8 94.6 L241.3 95.1 L241.6 92.7 L240.4 93.5 L240.5 90.2 L239.4 89.6 L240.1 87.3 L241.0 84.3 L244.3 84.0 L242.9 86.7 L246.0 86.7 L245.8 88.4 L245.0 90.7 L244.1 91.6 L246.0 92.1 L246.8 94.3 L248.8 96.7 L249.3 98.1 L249.6 99.6 L251.8 100.4 L251.6 102.2 L250.7 102.9 L250.2 103.4 L251.3 103.9 L250.7 104.9 L249.6 105.4 L247.2 105.4 L245.4 105.9 L243.6 106.2 L243.5 106.7 L241.0 107.3Z M237.6 93.2 L239.7 93.8 L240.5 95.7 L239.3 97.0 L239.6 98.8 L239.1 101.7 L236.2 102.7 L233.8 103.4 L232.9 101.9 L234.3 100.7 L233.5 98.6 L233.5 96.5 L235.7 96.2 L235.5 94.9 L236.2 93.8Z M268.4 133.5 L270.0 132.9 L273.4 132.7 L273.0 135.3 L272.7 135.9 L271.4 135.3 L269.2 134.1Z M261.9 127.5 L263.5 126.6 L264.4 128.3 L264.1 130.9 L263.1 131.3 L262.2 131.3 L262.2 128.7Z M262.5 124.3 L263.8 123.0 L263.9 125.2 L263.5 126.4 L262.5 125.4Z M285.8 138.2 L286.9 138.0 L290.1 138.6 L290.0 139.1 L287.6 139.3 L285.8 138.8Z M299.5 138.9 L300.6 138.4 L303.1 137.8 L302.1 139.1 L300.6 139.9 L299.6 139.7Z M252.8 130.1 L254.1 129.5 L254.4 130.1 L253.8 130.7Z M331.0 36.2 L330.2 32.8 L332.6 26.0 L335.7 19.2 L338.8 13.2 L343.5 8.7 L348.9 6.0 L355.2 3.3 L356.4 6.0 L350.5 11.9 L344.3 18.0 L340.4 23.8 L338.0 29.2 L335.7 33.8 L338.0 38.6 L334.9 39.1 L332.6 37.7Z M324.4 45.1 L326.8 45.1 L326.9 47.7 L324.8 47.7Z M373.7 182.1 L375.8 184.0 L376.9 186.1 L376.6 187.5 L374.8 188.3 L373.7 187.3 L373.4 184.7Z M332.2 177.5 L334.1 177.7 L334.0 178.2 L332.4 178.2Z M397.8 188.7 L401.2 189.4 L403.1 191.6 L405.6 193.6 L407.4 194.7 L409.8 196.3 L410.9 198.9 L412.1 200.3 L414.5 202.2 L414.1 206.6 L412.1 206.6 L408.7 203.6 L405.7 199.1 L403.5 196.7 L403.1 194.8 L400.4 192.3 L398.1 190.0Z M272.5 6.0 L275.6 6.7 L277.2 -0.2 L270.9 -2.4Z M135.2 -66.1 L135.2 -5.4 L141.5 6.7 L146.1 11.3 L153.9 11.3 L157.8 19.2 L161.0 30.2 L162.5 37.7 L166.4 41.0 L168.0 44.6 L164.9 45.5 L165.6 55.1 L166.4 61.0 L168.8 66.4 L171.1 71.6 L173.4 76.6 L177.3 78.2 L180.5 80.1 L182.8 76.6 L184.4 69.9 L186.7 62.8 L191.4 60.2 L197.6 53.1 L205.4 49.8 L210.1 44.6 L214.0 41.0 L214.8 32.8 L213.2 27.6 L217.1 19.2 L218.7 10.0 L220.2 3.3 L221.0 -66.1Z"/></clipPath><filter id="bl" x="-20%" y="-20%" width="140%" height="140%"><feGaussianBlur stdDeviation="2.4"/></filter><filter id="bl2" x="-20%" y="-20%" width="140%" height="140%"><feGaussianBlur stdDeviation="2"/></filter></defs>
<rect width="420" height="218" fill="#90d9fb"/>
<path d="M418.7 166.8 L420.1 165.6 L422.3 166.0 L421.5 167.6 L419.9 168.6 L418.7 168.1Z M413.2 208.1 L414.6 206.7 L418.4 207.7 L421.5 208.3 L423.8 208.3 L423.8 210.5 L418.4 209.7 L415.1 209.1Z M-13.0 60.6 L-10.6 49.8 L-5.2 44.6 L-3.5 41.0 L4.8 36.2 L12.0 38.6 L18.2 40.5 L26.0 41.9 L29.1 44.2 L32.3 44.2 L36.9 47.2 L41.6 44.6 L47.9 42.4 L49.4 40.5 L54.1 45.1 L60.3 43.3 L66.6 47.2 L69.7 51.5 L77.5 51.9 L80.6 49.8 L83.7 47.7 L90.0 51.9 L96.2 51.1 L99.3 49.8 L100.1 45.5 L98.9 36.7 L101.7 33.3 L104.8 40.0 L106.4 44.6 L107.9 49.0 L111.8 52.7 L114.2 51.1 L115.7 44.6 L121.2 43.3 L122.3 49.0 L121.2 55.1 L118.8 57.9 L114.9 57.9 L113.4 61.7 L111.8 65.7 L107.1 67.2 L103.2 66.8 L105.6 71.6 L101.7 78.2 L101.2 82.8 L104.0 83.7 L104.8 88.7 L108.7 88.7 L111.8 90.7 L116.5 93.5 L120.7 94.0 L121.2 99.6 L123.5 103.9 L125.9 103.4 L126.3 100.9 L125.9 97.0 L125.1 94.9 L129.0 91.6 L129.8 88.7 L127.4 83.7 L128.2 79.8 L127.4 72.3 L133.7 72.3 L137.6 75.6 L139.9 76.6 L140.7 82.8 L143.0 84.9 L146.1 83.4 L147.7 78.8 L148.5 78.5 L152.4 87.3 L153.9 92.9 L158.6 95.7 L161.7 99.6 L162.2 102.2 L160.2 103.7 L155.5 106.7 L149.3 106.7 L145.4 106.7 L142.2 109.5 L139.1 114.2 L143.0 111.0 L147.7 109.1 L148.8 110.0 L146.9 112.4 L148.0 116.0 L150.0 116.7 L153.2 117.2 L155.5 115.1 L154.7 117.2 L150.0 119.8 L146.1 121.8 L145.8 119.8 L148.5 117.8 L144.6 118.7 L142.2 120.2 L139.9 121.5 L138.8 123.7 L139.9 125.6 L137.6 126.4 L133.7 128.1 L133.7 130.3 L131.6 132.3 L130.5 135.3 L131.0 138.2 L129.0 140.1 L125.9 142.3 L122.7 145.7 L122.3 148.4 L124.0 153.7 L124.0 156.3 L122.7 157.0 L121.5 155.5 L119.9 152.0 L118.8 148.8 L116.5 148.9 L114.2 147.7 L110.3 147.9 L109.8 149.8 L107.1 149.6 L102.5 149.1 L97.8 152.3 L97.3 156.3 L96.5 161.5 L98.6 166.5 L101.7 168.6 L105.6 168.0 L107.6 166.5 L108.1 164.0 L111.8 163.0 L113.7 163.5 L112.6 166.5 L111.8 168.9 L111.0 172.2 L114.9 172.4 L118.8 173.3 L119.3 174.6 L118.5 177.8 L118.5 180.2 L120.4 182.6 L122.7 183.7 L125.1 182.6 L127.4 182.9 L128.5 184.2 L129.3 185.0 L131.3 181.0 L132.4 180.1 L135.2 179.8 L137.6 178.0 L137.9 179.4 L137.1 180.4 L139.9 179.4 L139.9 178.5 L142.2 179.9 L143.0 181.0 L146.1 180.9 L148.5 181.5 L152.4 180.7 L152.7 181.8 L154.3 184.2 L157.1 185.0 L159.4 187.7 L163.3 188.3 L167.2 189.2 L168.8 190.8 L170.6 194.7 L171.1 196.7 L172.7 197.8 L173.9 198.7 L177.3 199.1 L179.7 201.1 L183.6 201.9 L186.7 202.0 L189.0 203.3 L191.4 205.0 L194.0 205.8 L194.8 208.9 L194.5 211.6 L192.2 214.1 L190.6 216.0 L189.0 218.0 L188.3 229.4 L130.5 229.4 L130.1 218.8 L128.7 216.4 L126.6 212.4 L125.1 209.2 L122.7 206.9 L122.3 204.5 L123.8 202.8 L124.3 201.4 L122.7 200.9 L123.1 199.1 L124.3 196.7 L125.9 195.2 L126.6 193.6 L128.5 191.6 L128.2 188.9 L128.2 186.1 L126.6 184.2 L124.8 183.7 L123.8 185.9 L122.0 185.4 L119.6 184.5 L116.5 181.8 L115.3 180.2 L112.6 177.0 L109.5 176.2 L106.4 175.4 L103.2 172.5 L100.9 172.0 L97.8 172.5 L93.9 171.1 L90.0 168.9 L86.9 167.3 L84.5 165.0 L84.8 163.1 L83.0 159.8 L79.8 156.7 L78.3 154.6 L75.9 152.0 L73.6 149.3 L72.5 146.2 L70.0 145.1 L70.2 147.5 L72.8 151.1 L75.2 155.5 L77.0 158.6 L78.3 160.3 L77.5 160.8 L74.4 157.5 L73.9 155.1 L70.8 153.4 L70.9 151.6 L68.5 148.4 L66.6 143.8 L64.2 141.0 L61.0 139.9 L58.9 136.1 L58.0 133.7 L56.0 130.3 L55.2 128.5 L55.3 125.2 L55.7 119.8 L55.7 115.8 L54.6 111.0 L52.5 108.8 L49.0 105.2 L50.2 103.4 L49.4 99.6 L46.3 95.7 L44.7 91.6 L40.8 85.8 L36.9 84.3 L34.6 82.8 L30.7 80.4 L25.2 79.8 L21.3 77.6 L18.2 78.8 L15.9 80.4 L12.8 81.9 L13.5 76.6 L11.2 79.8 L9.6 82.8 L8.5 84.9 L5.0 88.7 L1.8 91.6 L-2.1 93.5 L-5.2 94.9 L-8.0 95.4 L-3.6 92.1 L-0.5 90.2 L2.6 87.3 L3.7 83.7 L1.1 84.0 L-3.6 83.7 L-3.6 79.8 L-8.3 77.2 L-9.9 74.0 L-8.3 70.6 L-5.2 69.3 L-2.1 67.5 L-2.1 64.7 L-5.2 64.3 L-9.9 64.7Z M211.2 61.0 L214.0 57.5 L217.1 60.2 L221.0 58.3 L224.1 57.1 L226.3 61.0 L227.7 63.6 L225.7 65.7 L221.0 68.2 L217.1 67.9 L213.8 66.8 L214.8 64.7 L211.7 63.2 L214.3 62.1Z M116.5 162.5 L119.6 160.6 L122.7 160.3 L125.9 161.5 L129.0 163.1 L131.3 164.5 L133.3 165.3 L132.1 165.8 L127.9 165.8 L128.7 164.6 L126.6 164.0 L123.5 162.6 L121.2 161.8 L118.1 162.6Z M133.0 168.3 L135.2 165.8 L137.2 166.0 L139.9 166.1 L142.4 167.8 L141.9 168.6 L139.1 168.6 L137.6 169.4 L136.0 168.6Z M127.0 168.3 L130.1 168.6 L129.0 169.3Z M144.3 168.1 L146.8 168.3 L146.1 169.0 L144.3 168.9Z M153.2 56.3 L149.3 63.6 L147.7 69.9 L146.1 73.3 L142.2 71.6 L136.8 67.2 L132.9 64.7 L128.2 65.4 L127.4 62.8 L133.7 61.0 L134.4 56.3 L136.0 51.9 L132.1 49.8 L129.0 45.5 L125.9 42.4 L122.0 42.8 L115.7 42.4 L111.8 40.0 L109.5 32.8 L110.3 23.2 L116.5 23.2 L122.7 23.8 L127.4 24.3 L129.0 28.6 L132.9 33.8 L137.6 37.7 L142.2 42.4 L144.6 46.8 L148.5 52.3Z M65.8 41.4 L63.5 35.3 L65.8 28.6 L71.3 26.5 L77.5 28.1 L81.4 26.0 L85.3 27.6 L85.3 35.3 L90.0 37.7 L91.5 43.3 L89.2 47.2 L83.7 47.7 L77.5 48.5 L72.0 48.1 L68.1 45.9Z M57.2 36.7 L53.3 31.7 L55.7 23.2 L59.6 19.2 L66.6 20.9 L68.9 26.0 L65.0 31.2 L61.9 35.7Z M66.6 15.0 L69.7 7.4 L77.5 7.4 L83.7 10.0 L84.5 15.0 L80.6 16.8 L74.4 19.2 L71.3 17.4Z M90.0 32.8 L90.0 27.6 L93.1 22.6 L97.0 24.9 L97.8 32.8 L94.7 35.7Z M100.1 22.1 L107.9 22.1 L108.7 27.6 L104.0 32.8 L100.1 31.2Z M93.9 44.6 L97.8 42.4 L100.1 46.8 L97.8 49.0 L94.7 47.7Z M105.6 18.0 L114.9 19.2 L124.3 18.6 L125.1 13.2 L121.2 8.0 L110.3 6.7 L105.6 8.0 L99.3 4.7 L104.0 13.2Z M89.2 15.0 L90.0 6.7 L95.4 6.0 L96.2 14.4 L93.1 16.2Z M98.6 13.2 L103.2 13.2 L103.2 17.4 L99.3 17.4Z M110.3 6.7 L124.3 8.7 L127.4 3.3 L127.4 -66.1 L105.6 -66.1Z M58.0 10.0 L63.5 1.2 L68.1 5.4 L65.0 10.6Z M113.4 66.4 L114.9 60.2 L117.3 59.1 L119.6 62.8 L122.7 65.4 L124.0 67.5 L120.4 67.9 L116.5 69.3 L113.4 67.5Z M156.6 112.8 L157.8 109.5 L158.9 107.1 L160.5 103.7 L162.5 103.2 L161.7 106.7 L162.5 108.4 L165.6 108.8 L166.4 110.7 L166.9 113.1 L165.6 115.1 L164.1 114.2 L162.5 114.4 L161.7 112.8Z M8.1 87.6 L10.4 85.5 L12.0 87.0 L9.6 89.0Z M41.6 96.7 L43.6 97.0 L44.4 101.4 L42.4 99.6Z M148.5 107.4 L152.4 108.6 L152.7 109.3 L149.3 108.1Z M289.3 37.2 L292.8 37.7 L297.5 41.0 L295.9 43.7 L300.6 45.1 L305.3 46.8 L311.5 51.9 L313.1 55.1 L311.5 58.3 L303.7 57.1 L299.8 55.1 L302.9 62.8 L303.7 65.4 L306.8 66.4 L308.4 63.6 L311.5 63.9 L311.5 59.1 L314.6 57.1 L317.7 58.3 L318.1 51.1 L316.6 48.5 L320.9 51.1 L320.9 55.1 L324.0 52.3 L331.8 47.7 L333.3 50.2 L338.0 48.5 L342.7 46.8 L343.5 43.3 L348.9 45.5 L353.6 46.8 L353.6 49.0 L356.0 49.4 L355.2 42.4 L353.6 35.3 L356.7 27.6 L361.4 27.6 L363.0 35.3 L362.2 42.4 L363.8 49.0 L362.2 55.9 L364.5 55.1 L365.3 46.8 L364.2 37.7 L366.1 28.6 L370.8 31.2 L373.9 24.9 L375.5 32.8 L377.0 37.7 L380.1 24.9 L384.8 16.2 L389.5 12.5 L397.3 9.4 L405.1 6.7 L411.3 -1.7 L416.0 3.3 L423.8 6.7 L444.1 10.0 L444.1 197.5 L423.8 163.1 L421.2 163.5 L420.7 165.1 L420.1 163.1 L417.6 163.0 L415.6 164.3 L414.1 167.3 L415.2 169.8 L418.0 172.2 L419.6 177.0 L419.1 179.4 L416.0 181.2 L415.6 182.6 L412.9 184.0 L412.6 181.8 L410.6 180.9 L409.0 178.6 L406.7 177.5 L405.9 176.2 L405.1 177.8 L404.3 180.2 L403.9 182.6 L405.1 184.2 L405.9 186.2 L407.4 186.9 L409.0 188.1 L410.4 190.5 L410.6 193.1 L411.7 195.3 L410.6 195.5 L409.0 194.4 L407.1 193.0 L405.9 190.5 L405.6 188.9 L404.6 187.3 L402.8 185.0 L402.8 181.8 L402.9 178.6 L402.0 175.4 L401.4 172.2 L400.4 170.9 L398.9 171.4 L397.8 172.5 L396.2 172.2 L396.5 168.9 L395.0 166.0 L393.1 164.0 L392.3 161.8 L390.3 161.5 L387.9 162.6 L384.8 163.1 L384.5 164.8 L381.7 166.5 L379.4 168.9 L377.5 171.2 L375.5 172.5 L374.2 173.8 L374.4 176.7 L373.6 179.4 L373.6 181.3 L372.3 182.9 L371.1 183.7 L370.0 184.8 L368.4 183.4 L366.9 179.4 L365.8 177.0 L364.5 173.8 L363.0 169.8 L362.7 167.3 L362.5 164.0 L362.2 162.3 L359.1 164.3 L356.7 162.0 L358.3 160.6 L356.0 159.8 L354.1 158.1 L352.8 156.5 L348.9 156.8 L345.0 157.0 L340.8 156.3 L338.5 155.8 L337.2 153.7 L334.1 154.4 L331.0 152.8 L328.7 150.5 L327.9 148.4 L325.5 147.7 L324.0 148.8 L325.2 152.3 L327.1 154.6 L327.4 156.3 L328.3 157.7 L329.0 155.3 L329.6 157.2 L329.4 158.4 L331.0 158.7 L333.3 158.7 L335.4 156.7 L336.9 154.9 L337.2 158.1 L340.4 159.6 L342.4 161.5 L340.4 164.8 L339.1 167.3 L337.2 168.9 L334.9 170.6 L330.5 172.2 L325.5 175.0 L319.3 177.4 L317.0 177.5 L316.2 175.4 L315.7 172.2 L313.5 168.1 L310.3 163.1 L308.4 158.7 L306.0 155.5 L304.8 153.2 L303.7 151.1 L303.7 149.3 L302.6 152.3 L300.9 150.5 L299.8 148.4 L300.3 150.5 L301.8 153.4 L302.6 155.3 L303.7 157.2 L304.9 158.9 L306.2 162.0 L307.1 166.3 L309.2 168.9 L310.7 172.9 L313.1 174.6 L315.7 177.0 L316.5 179.3 L319.3 181.2 L322.4 179.9 L325.5 179.8 L329.1 179.0 L329.3 181.2 L327.9 184.2 L326.3 187.3 L324.0 190.5 L319.8 194.4 L317.0 197.0 L314.6 199.1 L313.1 201.1 L311.0 203.7 L310.3 205.3 L310.4 208.1 L310.7 210.8 L312.0 213.7 L312.4 214.3 L312.3 218.0 L312.6 229.4 L268.6 229.4 L270.0 217.3 L269.7 211.3 L268.3 206.9 L267.5 205.0 L265.6 202.8 L262.7 198.4 L263.8 196.9 L264.2 195.9 L264.4 194.5 L264.4 192.8 L264.2 191.3 L263.0 190.5 L262.0 190.5 L258.5 190.8 L256.9 188.9 L254.4 187.5 L251.0 188.0 L248.8 188.9 L246.0 190.2 L242.9 189.4 L237.4 190.6 L232.3 187.7 L228.5 184.2 L227.7 182.6 L225.7 180.2 L224.8 178.8 L223.0 178.0 L223.2 176.2 L221.8 174.3 L223.4 172.2 L224.1 168.8 L222.6 164.3 L223.8 161.5 L224.3 159.4 L226.5 155.3 L228.2 153.4 L229.0 152.1 L233.2 149.5 L234.1 147.7 L233.8 145.7 L234.7 144.2 L237.2 141.8 L238.5 141.0 L239.9 137.6 L240.8 137.4 L244.4 138.6 L246.0 138.9 L248.2 137.8 L253.8 135.7 L256.9 135.7 L261.3 135.5 L264.5 134.7 L266.3 135.1 L265.6 136.4 L265.6 137.6 L265.9 139.7 L264.9 141.2 L266.4 142.5 L269.7 143.1 L272.7 144.0 L275.0 146.2 L277.2 147.7 L278.9 147.9 L280.3 144.6 L282.8 143.1 L284.4 143.3 L286.5 144.6 L288.4 145.5 L291.5 145.9 L295.7 146.2 L297.5 145.5 L299.5 146.0 L301.8 146.4 L302.6 145.9 L303.4 144.6 L303.7 143.3 L304.5 141.2 L304.9 138.2 L305.6 136.1 L303.1 135.7 L301.7 136.8 L300.3 137.2 L297.0 135.5 L296.7 136.6 L294.7 136.6 L293.2 135.7 L291.8 135.3 L290.9 132.5 L290.0 130.7 L290.0 129.1 L290.9 128.1 L289.7 127.7 L287.2 127.5 L287.0 129.1 L285.4 128.9 L284.8 128.3 L284.4 129.3 L285.0 130.7 L285.4 132.1 L286.5 133.3 L286.5 133.9 L285.8 133.3 L285.0 133.5 L285.3 134.7 L284.5 134.3 L285.1 136.3 L284.0 136.4 L283.0 135.7 L282.3 133.9 L283.0 132.9 L281.9 132.7 L281.4 131.5 L280.6 130.1 L279.4 128.5 L279.4 126.4 L279.2 125.4 L278.0 124.3 L276.4 123.0 L274.7 122.0 L272.8 120.5 L272.3 118.7 L271.4 118.0 L270.8 119.1 L270.3 117.6 L268.3 117.8 L268.4 120.5 L270.3 122.0 L271.3 124.3 L274.1 125.4 L273.9 126.2 L275.6 127.2 L278.0 129.1 L277.6 129.7 L275.9 128.5 L275.0 129.9 L275.8 131.3 L274.8 132.5 L273.6 133.5 L273.6 132.9 L274.4 131.3 L274.1 130.3 L273.4 129.3 L272.2 128.1 L271.3 127.7 L269.4 126.6 L268.1 125.6 L266.3 124.3 L265.5 123.3 L265.2 122.0 L264.4 120.7 L263.0 120.0 L261.6 121.1 L260.6 121.5 L259.4 122.6 L257.5 122.4 L256.4 122.2 L254.6 122.4 L253.8 124.1 L254.1 125.4 L252.5 126.4 L250.5 127.7 L249.1 129.5 L248.6 130.3 L249.4 131.7 L248.3 132.7 L247.9 134.1 L246.0 135.7 L242.2 135.9 L240.7 137.0 L240.4 137.2 L239.3 136.3 L238.2 134.9 L236.8 135.3 L235.2 135.3 L235.4 132.5 L234.3 131.7 L235.1 129.3 L235.5 126.8 L235.2 124.7 L234.6 123.0 L236.2 122.0 L238.2 121.8 L240.2 121.8 L243.2 122.0 L246.3 122.2 L246.8 121.8 L247.2 119.4 L247.4 117.4 L247.2 116.0 L245.7 113.8 L244.4 112.8 L242.2 112.4 L241.6 111.0 L243.6 110.0 L246.0 110.5 L246.6 110.3 L246.1 107.9 L247.2 108.6 L249.3 108.4 L251.4 106.9 L251.6 104.9 L253.0 104.4 L254.6 103.7 L255.3 102.2 L256.4 99.9 L257.7 98.6 L260.0 98.3 L261.7 98.1 L262.5 97.0 L262.5 92.9 L261.7 90.2 L261.9 88.4 L264.5 87.0 L265.6 86.7 L265.5 90.2 L266.1 90.4 L265.0 92.1 L264.2 93.8 L264.5 94.9 L266.1 95.9 L266.1 97.1 L268.0 96.5 L270.0 95.4 L271.4 97.3 L274.1 96.2 L277.2 94.9 L278.3 95.9 L280.1 95.9 L280.3 94.6 L282.0 92.4 L281.9 89.3 L282.6 87.3 L284.4 86.7 L285.3 88.4 L286.5 88.7 L287.2 85.2 L285.8 83.7 L285.8 82.2 L287.6 81.3 L289.7 81.0 L292.8 81.3 L294.3 80.1 L296.2 80.1 L294.3 79.1 L293.9 77.9 L291.2 78.2 L288.1 79.1 L285.0 80.1 L282.6 78.2 L282.3 75.0 L282.2 71.6 L282.6 69.3 L284.5 67.2 L286.5 64.7 L288.7 62.8 L288.1 60.6 L286.9 59.8 L283.7 60.6 L282.3 63.6 L280.8 67.5 L278.3 69.9 L276.2 72.3 L275.9 77.6 L278.3 79.5 L278.6 81.0 L278.0 81.9 L275.6 84.0 L275.2 86.4 L274.7 89.6 L273.7 91.3 L271.4 92.9 L269.4 93.2 L268.9 91.6 L269.2 89.6 L267.8 86.7 L266.6 83.4 L265.8 81.9 L265.6 80.1 L265.0 82.5 L262.8 84.6 L261.6 85.5 L260.0 85.8 L258.0 83.4 L257.2 81.3 L257.1 78.5 L256.9 75.9 L257.1 73.3 L258.8 71.3 L260.8 69.6 L263.9 67.2 L266.3 63.6 L268.1 59.8 L269.4 55.9 L271.4 53.9 L273.3 51.1 L274.8 48.5 L276.4 45.5 L278.7 43.3 L281.9 41.4 L285.8 38.6Z M240.2 106.9 L242.1 104.7 L244.4 104.2 L244.1 103.7 L241.0 102.9 L242.7 100.9 L241.8 100.1 L242.2 98.6 L244.4 98.6 L244.4 97.0 L243.5 95.7 L243.8 94.6 L241.3 95.1 L241.6 92.7 L240.4 93.5 L240.5 90.2 L239.4 89.6 L240.1 87.3 L241.0 84.3 L244.3 84.0 L242.9 86.7 L246.0 86.7 L245.8 88.4 L245.0 90.7 L244.1 91.6 L246.0 92.1 L246.8 94.3 L248.8 96.7 L249.3 98.1 L249.6 99.6 L251.8 100.4 L251.6 102.2 L250.7 102.9 L250.2 103.4 L251.3 103.9 L250.7 104.9 L249.6 105.4 L247.2 105.4 L245.4 105.9 L243.6 106.2 L243.5 106.7 L241.0 107.3Z M237.6 93.2 L239.7 93.8 L240.5 95.7 L239.3 97.0 L239.6 98.8 L239.1 101.7 L236.2 102.7 L233.8 103.4 L232.9 101.9 L234.3 100.7 L233.5 98.6 L233.5 96.5 L235.7 96.2 L235.5 94.9 L236.2 93.8Z M268.4 133.5 L270.0 132.9 L273.4 132.7 L273.0 135.3 L272.7 135.9 L271.4 135.3 L269.2 134.1Z M261.9 127.5 L263.5 126.6 L264.4 128.3 L264.1 130.9 L263.1 131.3 L262.2 131.3 L262.2 128.7Z M262.5 124.3 L263.8 123.0 L263.9 125.2 L263.5 126.4 L262.5 125.4Z M285.8 138.2 L286.9 138.0 L290.1 138.6 L290.0 139.1 L287.6 139.3 L285.8 138.8Z M299.5 138.9 L300.6 138.4 L303.1 137.8 L302.1 139.1 L300.6 139.9 L299.6 139.7Z M252.8 130.1 L254.1 129.5 L254.4 130.1 L253.8 130.7Z M331.0 36.2 L330.2 32.8 L332.6 26.0 L335.7 19.2 L338.8 13.2 L343.5 8.7 L348.9 6.0 L355.2 3.3 L356.4 6.0 L350.5 11.9 L344.3 18.0 L340.4 23.8 L338.0 29.2 L335.7 33.8 L338.0 38.6 L334.9 39.1 L332.6 37.7Z M324.4 45.1 L326.8 45.1 L326.9 47.7 L324.8 47.7Z M373.7 182.1 L375.8 184.0 L376.9 186.1 L376.6 187.5 L374.8 188.3 L373.7 187.3 L373.4 184.7Z M332.2 177.5 L334.1 177.7 L334.0 178.2 L332.4 178.2Z M397.8 188.7 L401.2 189.4 L403.1 191.6 L405.6 193.6 L407.4 194.7 L409.8 196.3 L410.9 198.9 L412.1 200.3 L414.5 202.2 L414.1 206.6 L412.1 206.6 L408.7 203.6 L405.7 199.1 L403.5 196.7 L403.1 194.8 L400.4 192.3 L398.1 190.0Z M272.5 6.0 L275.6 6.7 L277.2 -0.2 L270.9 -2.4Z" fill="#d0e9c8" stroke="#b5ccbd" stroke-width=".4"/>
<path d="M135.2 -66.1 L135.2 -5.4 L141.5 6.7 L146.1 11.3 L153.9 11.3 L157.8 19.2 L161.0 30.2 L162.5 37.7 L166.4 41.0 L168.0 44.6 L164.9 45.5 L165.6 55.1 L166.4 61.0 L168.8 66.4 L171.1 71.6 L173.4 76.6 L177.3 78.2 L180.5 80.1 L182.8 76.6 L184.4 69.9 L186.7 62.8 L191.4 60.2 L197.6 53.1 L205.4 49.8 L210.1 44.6 L214.0 41.0 L214.8 32.8 L213.2 27.6 L217.1 19.2 L218.7 10.0 L220.2 3.3 L221.0 -66.1Z" fill="#f9fafa" stroke="#dfe8ea" stroke-width=".5"/>
<g clip-path="url(#lc)"><g filter="url(#bl)">
<path d="M-16.1 -66.1 L-16.1 44.6 L15.1 47.7 L38.5 51.1 L58.8 53.1 L74.4 64.7 L93.1 76.6 L100.9 82.8 L111.8 85.8 L124.3 73.3 L127.4 91.6 L136.8 91.6 L149.3 94.3 L163.3 73.3 L171.1 -66.1Z" fill="#e6ebdf" opacity="1"/>
<path d="M46.3 -66.1 L46.3 40.0 L100.9 40.0 L132.1 69.9 L155.5 73.3 L155.5 -66.1Z" fill="#f2efdc" opacity="0.9"/>
<path d="M-13.0 55.1 L15.1 51.1 L38.5 55.1 L58.8 62.8 L77.5 78.2 L96.2 90.2 L108.7 99.6 L121.2 103.4 L127.4 103.4 L136.8 103.4 L149.3 102.2 L160.2 104.7 L155.5 114.2 L143.0 117.6 L127.4 118.7 L118.1 116.5 L105.6 113.1 L96.2 104.7 L80.6 98.3 L69.7 100.9 L65.0 107.1 L58.8 114.2 L55.7 123.0 L54.1 111.9 L47.9 102.2 L38.5 88.7 L15.1 81.3 L-0.5 87.3 L-9.9 73.3Z" fill="#b3deae" opacity="1"/>
<path d="M-13.0 57.1 L-0.5 59.1 L2.6 76.6 L-5.2 82.8 L-13.0 76.6Z" fill="#d6ebcb" opacity="0.9"/>
<path d="M61.9 113.1 L77.5 108.4 L93.1 108.4 L97.8 120.9 L95.4 137.2 L93.1 150.2 L86.9 152.0 L80.6 158.9 L74.4 150.2 L66.6 144.8 L61.9 139.1 L60.3 129.3Z" fill="#f2eedb" opacity="1"/>
<path d="M68.1 142.9 L86.9 146.6 L93.1 157.2 L93.1 164.0 L88.4 167.3 L83.7 162.3 L74.4 153.7Z" fill="#ecedd5" opacity="0.9"/>
<path d="M97.8 111.9 L111.8 114.2 L119.6 125.2 L124.3 129.3 L110.3 137.2 L99.3 135.3Z" fill="#dcebc8" opacity="0.9"/>
<path d="M102.5 137.2 L118.1 135.3 L132.1 125.2 L139.9 118.7 L141.5 114.2 L146.1 118.7 L136.8 129.3 L130.5 139.1 L124.3 146.6 L121.2 155.5 L116.5 148.4 L105.6 149.3 L99.3 148.4Z" fill="#bfe3b8" opacity="0.95"/>
<path d="M93.1 165.6 L108.7 162.3 L114.9 173.8 L124.3 183.4 L130.5 183.4 L155.5 183.4 L171.1 192.8 L178.9 200.6 L186.7 229.4 L124.3 229.4 L127.4 197.5 L118.1 185.0 L100.9 173.8Z" fill="#bde2b6" opacity="0.95"/>
<path d="M124.3 199.1 L129.0 200.6 L135.2 229.4 L121.2 229.4 L121.2 205.3Z" fill="#ecedd6" opacity="0.85"/>
<path d="M183.6 200.6 L196.1 203.7 L196.1 219.6 L180.5 219.6Z" fill="#e2edcd" opacity="0.85"/>
<path d="M135.2 183.4 L152.4 182.6 L152.4 187.3 L136.8 188.1Z" fill="#dbebc6" opacity="0.7"/>
<path d="M255.3 85.8 L258.5 73.3 L267.8 59.1 L277.2 42.4 L295.9 42.4 L311.5 55.1 L327.1 53.1 L342.7 53.1 L366.1 53.1 L389.5 40.0 L444.1 32.8 L444.1 104.7 L412.9 105.9 L397.3 103.4 L381.7 98.3 L366.1 92.9 L350.5 91.6 L334.9 92.9 L319.3 94.3 L303.7 95.7 L291.2 91.6 L283.4 81.3 L274.1 88.7 L267.8 84.3 L261.6 87.3Z" fill="#b1ddab" opacity="1"/>
<path d="M256.9 79.8 L261.6 69.9 L269.4 55.1 L277.2 44.6 L283.4 46.8 L275.6 59.1 L269.4 73.3 L263.1 81.3Z" fill="#dcebd0" opacity="0.8"/>
<path d="M295.9 16.2 L319.3 47.7 L342.7 47.7 L361.4 46.8 L381.7 35.3 L444.1 22.1 L444.1 -66.1 L295.9 -66.1Z" fill="#e5ebe0" opacity="0.95"/>
<path d="M233.5 120.9 L255.3 122.0 L255.3 129.3 L249.1 135.3 L235.1 136.3Z" fill="#e3edd0" opacity="0.85"/>
<path d="M291.2 126.2 L305.3 125.2 L317.7 127.2 L319.3 135.3 L305.3 137.2 L292.8 136.3Z" fill="#ebeed9" opacity="0.9"/>
<path d="M292.8 113.1 L308.4 108.4 L320.9 105.9 L334.9 100.9 L358.3 98.3 L377.0 103.4 L389.5 107.1 L405.1 107.1 L444.1 107.1 L444.1 142.9 L411.3 146.6 L405.1 153.7 L400.4 152.0 L386.4 152.8 L373.9 148.4 L367.7 142.9 L358.3 135.3 L342.7 135.3 L330.2 128.3 L320.9 122.0 L311.5 118.7 L302.1 116.5Z" fill="#f3efdd" opacity="1"/>
<path d="M221.0 150.2 L236.6 142.9 L249.1 140.1 L264.7 142.0 L267.8 144.8 L288.1 144.8 L300.6 146.6 L305.3 141.0 L314.6 134.3 L324.0 131.3 L334.9 132.3 L345.8 135.3 L358.3 135.3 L364.5 141.0 L361.4 152.0 L358.3 158.9 L353.6 158.9 L345.8 158.9 L339.6 168.9 L330.2 175.4 L317.7 180.2 L314.6 177.0 L311.5 173.0 L306.8 176.2 L295.9 177.8 L272.5 176.2 L249.1 174.6 L233.5 173.8 L221.0 172.2Z" fill="#f9f4e3" opacity="1"/>
<path d="M222.6 177.8 L241.3 179.4 L264.7 180.2 L288.1 181.8 L302.1 181.0 L308.4 177.0 L313.1 183.4 L306.8 191.3 L297.5 202.2 L295.9 229.4 L264.7 229.4 L263.1 192.8 L249.1 190.5 L233.5 191.3 L225.7 183.4Z" fill="#bbe1b4" opacity="1"/>
<path d="M311.5 178.6 L330.2 177.8 L328.7 189.7 L316.2 200.6 L313.1 216.4 L306.8 216.4 L306.8 200.6 L311.5 191.3 L316.2 185.0Z" fill="#ecedd6" opacity="0.95"/>
<path d="M355.2 146.6 L369.2 142.9 L386.4 153.7 L392.6 162.3 L386.4 165.6 L373.9 185.0 L367.7 183.4 L361.4 165.6 L355.2 160.6Z" fill="#e0ecca" opacity="0.95"/>
<path d="M363.0 168.9 L364.5 177.0 L368.4 184.2 L370.8 183.4 L367.7 175.4 L366.1 167.3Z" fill="#c3e4ba" opacity="0.8"/>
<path d="M389.5 152.0 L402.0 151.1 L409.8 148.4 L444.1 152.0 L444.1 216.4 L395.7 216.4 L398.9 172.2 L392.6 162.3Z" fill="#bbe1b4" opacity="1"/>
</g></g>
<path d="M135.2 -66.1 L135.2 -5.4 L141.5 6.7 L146.1 11.3 L153.9 11.3 L157.8 19.2 L161.0 30.2 L162.5 37.7 L166.4 41.0 L168.0 44.6 L164.9 45.5 L165.6 55.1 L166.4 61.0 L168.8 66.4 L171.1 71.6 L173.4 76.6 L177.3 78.2 L180.5 80.1 L182.8 76.6 L184.4 69.9 L186.7 62.8 L191.4 60.2 L197.6 53.1 L205.4 49.8 L210.1 44.6 L214.0 41.0 L214.8 32.8 L213.2 27.6 L217.1 19.2 L218.7 10.0 L220.2 3.3 L221.0 -66.1Z" fill="none" stroke="#e6eadf" stroke-width="3" clip-path="url(#lc)" opacity=".9"/>
<path d="M331.0 36.2 L330.2 32.8 L332.6 26.0 L335.7 19.2 L338.8 13.2 L343.5 8.7 L348.9 6.0 L355.2 3.3 L356.4 6.0 L350.5 11.9 L344.3 18.0 L340.4 23.8 L338.0 29.2 L335.7 33.8 L338.0 38.6 L334.9 39.1 L332.6 37.7Z" fill="#f6f8f6"/>
<path d="M294.5 126.8 L292.8 125.2 L292.3 124.1 L292.8 122.2 L293.9 120.5 L295.4 118.3 L297.0 115.6 L298.7 115.1 L299.8 116.3 L301.5 116.3 L299.8 117.8 L301.2 119.8 L302.1 120.0 L304.3 118.7 L306.0 117.8 L307.6 119.4 L309.9 120.9 L311.0 121.8 L313.1 123.0 L314.0 125.2 L314.0 126.0 L312.3 127.2 L311.0 127.2 L308.4 127.2 L305.7 126.6 L303.7 125.2 L301.4 125.2 L299.5 125.6 L298.1 126.6 L295.9 127.0Z" fill="#90d9fb"/>
<path d="M303.7 116.9 L304.5 114.9 L307.6 114.0 L310.4 113.8 L308.4 116.5 L307.3 117.8 L306.2 118.0 L304.5 117.8Z" fill="#90d9fb"/>
<path d="M291.2 128.3 L292.8 127.2 L295.1 127.7 L294.3 128.5 L292.0 128.5Z" fill="#90d9fb"/>
<path d="M322.4 117.6 L324.0 116.5 L326.3 115.4 L328.7 114.4 L331.8 114.4 L331.8 118.0 L328.7 119.6 L327.6 120.2 L329.4 122.6 L331.0 124.1 L331.3 126.2 L332.6 128.1 L331.6 129.3 L333.0 130.9 L333.2 134.3 L333.0 135.5 L330.2 136.1 L327.6 134.7 L326.3 134.5 L325.4 132.5 L326.0 130.7 L326.5 128.7 L327.6 128.5 L326.3 127.9 L325.5 126.2 L324.4 124.7 L323.4 123.0 L323.0 120.9 L322.1 119.4Z" fill="#90d9fb"/>
<path d="M105.6 114.9 L108.7 113.5 L111.0 110.7 L114.9 111.9 L117.0 114.7 L114.2 115.4 L111.8 114.4 L107.9 115.1Z" fill="#90d9fb"/>
<path d="M112.1 125.2 L111.8 119.8 L113.4 117.2 L116.0 116.7 L114.5 120.9 L114.5 124.5 L113.4 125.8Z" fill="#90d9fb"/>
<path d="M117.3 116.7 L118.8 116.3 L122.0 116.5 L124.3 118.7 L123.5 119.8 L121.6 119.8 L121.6 122.4 L120.4 123.0 L118.8 121.5 L119.2 118.7Z" fill="#90d9fb"/>
<path d="M119.2 125.6 L120.4 124.7 L124.3 123.5 L126.0 123.3 L125.1 124.3 L122.0 126.2 L119.6 126.4Z" fill="#90d9fb"/>
<path d="M124.6 122.4 L125.9 121.1 L129.8 120.7 L130.2 122.0 L128.2 122.4 L125.9 122.6Z" fill="#90d9fb"/>
<path d="M57.2 61.7 L60.3 55.1 L64.2 56.7 L65.0 61.0 L61.1 63.2Z" fill="#90d9fb"/>
<path d="M66.6 76.6 L69.7 72.3 L75.9 71.0 L78.3 71.6 L74.4 75.0 L70.5 76.9Z" fill="#90d9fb"/>
<path d="M94.8 97.5 L96.7 97.3 L98.9 105.7 L97.8 106.2 L95.4 101.7Z" fill="#90d9fb"/>
<path d="M75.9 83.7 L79.1 81.3 L83.0 81.9 L79.1 82.8Z" fill="#90d9fb"/>
<path d="M296.2 79.8 L297.5 75.0 L300.3 75.9 L299.8 79.1 L297.9 80.1Z" fill="#90d9fb"/>
<path d="M302.6 76.3 L303.7 71.3 L305.7 73.3 L305.3 75.9 L304.2 76.9Z" fill="#90d9fb"/>
<path d="M298.6 198.3 L299.0 197.0 L302.1 197.0 L302.3 199.2 L301.0 201.9 L299.0 201.6 L298.7 199.8Z" fill="#90d9fb"/>
<path d="M57.2 109.5 L100.9 109.5 L110.3 111.9 L117.3 115.4 L120.4 118.0 L120.4 124.1 L125.9 123.5 L125.9 122.0 L129.8 120.5 L132.6 118.7 L137.6 118.7 L139.4 115.8 L141.1 113.3 L143.3 114.0 L143.3 117.2 L144.6 118.7 M29.1 44.2 L29.1 78.8 L32.3 79.8 L34.6 82.8 L37.7 80.7 L41.6 88.7 L46.0 91.6 L46.3 94.9 M66.4 143.8 L70.2 143.5 L75.9 146.0 L80.3 146.0 L83.0 145.1 L86.1 149.1 L88.4 150.2 L90.9 148.8 L93.9 152.8 L97.5 155.6 M105.3 174.6 L106.4 172.2 L107.9 172.0 L107.1 169.3 L109.9 169.3 L111.4 168.1 M109.9 169.3 L109.9 172.4 L111.4 172.7 M125.9 195.3 L131.3 197.5 L131.6 198.9 L135.2 201.1 L139.9 204.1 L140.7 199.1 L140.2 194.8 L144.6 195.6 L143.8 188.1 L136.8 186.6 L136.0 183.4 L135.2 179.8 M139.9 204.1 L135.2 208.4 L134.4 212.4 L139.0 212.4 L139.0 214.8 L141.5 217.2 M123.8 202.8 L125.9 205.3 L127.0 203.0 L131.3 197.5 M154.3 184.2 L153.5 188.1 L155.5 189.4 L155.2 194.4 L149.3 194.4 L149.3 191.3 L144.6 195.6 M159.7 188.1 L158.6 191.3 L161.0 194.4 L164.1 193.9 L168.0 194.1 L168.6 190.9 M164.9 188.4 L164.1 193.9 M246.0 139.1 L246.8 144.8 L241.3 148.4 L235.5 150.7 L235.5 153.2 L228.8 152.5 M235.5 153.2 L235.5 155.5 L230.4 155.5 L230.4 159.8 L228.8 160.6 L228.8 163.5 L222.6 163.5 M235.5 153.2 L241.6 157.2 L239.0 157.2 L240.5 173.0 L231.9 173.3 L230.1 174.3 M241.6 157.2 L250.7 164.0 L254.2 167.3 L255.7 167.1 L255.7 171.4 L254.6 173.0 L249.1 173.8 L244.4 176.2 L240.5 173.0 M254.2 167.3 L267.8 159.8 L264.7 158.1 L263.9 148.4 L267.0 142.9 M263.9 148.4 L260.8 141.0 L262.4 135.5 M267.8 159.8 L272.5 160.6 L286.5 166.5 L286.5 165.6 L288.1 165.6 L288.1 145.5 M288.1 162.3 L306.7 162.3 M272.5 160.6 L273.3 171.4 L270.2 175.4 L270.9 177.0 M286.5 166.5 L286.5 172.7 L284.2 177.0 L285.8 181.8 L292.8 182.6 L300.6 181.8 L302.1 185.0 M253.3 187.5 L253.3 183.4 L254.7 179.1 L256.1 175.9 L260.0 177.0 L264.7 176.6 L270.2 175.9 L271.7 179.4 L267.8 185.0 L263.1 187.3 L262.4 190.2 M306.0 175.0 L308.4 174.3 L315.2 177.8 L316.2 180.2 L324.0 185.0 L319.3 189.7 L314.6 191.3 L309.9 192.0 L305.3 190.5 L302.1 185.0 L303.7 178.6 L306.0 175.0 M302.1 199.1 L307.9 202.2 L310.3 204.8 M313.1 200.2 L313.1 192.8 L314.6 191.3 M302.1 199.1 L302.1 190.9 L305.3 190.5 M244.4 176.2 L244.7 180.2 L244.9 189.7 M240.5 173.0 L240.5 181.0 L236.6 181.8 L237.4 190.6 M236.6 181.8 L231.9 178.2 L225.7 180.2 M231.3 186.7 L235.8 185.6 L236.6 181.8 M251.0 188.0 L249.4 180.2 L244.7 180.2 M249.4 180.2 L252.7 178.2 L254.7 179.1 M271.7 179.4 L272.5 185.0 L269.4 194.1 L274.1 194.4 L278.0 192.0 L278.0 190.5 L284.2 190.0 L291.8 189.7 L297.1 192.0 L297.5 194.4 L295.3 199.7 L294.8 204.4 L297.1 210.3 L293.6 210.8 L293.6 216.4 M269.4 194.1 L266.7 194.1 L266.7 195.9 L264.4 195.9 M274.1 194.4 L271.7 199.1 L266.6 203.7 L268.1 206.6 L275.0 206.7 L275.6 210.0 L283.4 210.0 L283.4 214.8 L286.5 214.8 L286.5 218.0 M295.3 199.7 L296.7 199.1 L302.1 199.1 M296.7 199.1 L297.1 201.2 L296.7 204.4 L294.8 204.4 M297.1 192.0 L302.1 190.9 M302.6 146.0 L303.5 149.3 M303.5 149.3 L306.8 149.6 L309.9 144.8 L314.6 146.6 L318.8 149.8 L321.6 150.0 L323.5 151.1 L324.6 151.1 M315.9 171.6 L317.7 169.9 L322.4 170.6 L330.2 167.3 L334.9 165.6 L336.0 162.3 L335.2 161.1 L331.0 160.8 L329.4 158.4 M330.2 167.3 L331.8 171.2 M335.2 161.1 L336.5 157.4 M309.9 144.8 L309.6 142.2 L313.1 140.3 L315.2 134.9 L319.0 134.9 L320.9 137.6 L320.1 141.0 L323.5 146.6 L324.8 148.4 M305.3 137.2 L315.2 134.9 M319.0 134.9 L317.7 130.5 L319.0 129.9 L321.6 131.5 L325.2 132.5 M304.6 142.3 L306.0 144.0 L309.6 142.2 M304.5 142.7 L304.5 145.7 L303.5 149.3 M313.8 126.2 L317.0 127.0 L319.3 126.6 L321.6 125.6 L324.8 125.6 M311.5 122.2 L317.7 123.9 L321.6 125.6 M344.7 157.0 L347.4 153.7 L343.9 148.8 L344.3 141.0 L344.6 136.1 L338.0 132.9 L333.3 134.5 M343.9 148.8 L352.1 148.9 L357.2 144.9 L358.3 141.0 L360.6 136.3 L365.3 135.3 M344.6 136.1 L350.5 134.7 L355.2 135.3 L360.6 136.3 M355.2 135.3 L354.4 131.3 L358.3 128.9 L363.8 130.3 M336.5 126.6 L340.4 123.7 L344.3 126.8 L346.6 129.3 L352.8 134.5 M355.5 159.4 L359.9 158.1 L358.3 152.3 L364.5 146.6 L365.3 143.3 L369.2 138.2 M365.3 135.3 L369.2 138.2 L372.3 143.8 L374.2 147.5 L375.5 148.0 L386.4 152.1 L387.9 153.4 L392.6 152.3 L400.4 151.4 L400.9 152.1 M374.2 147.5 L374.2 150.5 L386.4 154.8 L386.4 152.1 M386.4 154.8 L387.6 162.8 M387.9 155.5 L392.6 157.2 L393.1 164.3 M387.9 155.5 L392.6 154.1 L392.6 152.3 M393.1 164.3 L394.6 158.9 L397.3 154.6 L400.9 152.1 L403.1 158.9 L406.7 163.1 L405.1 165.1 L401.5 170.6 L403.1 171.7 L403.5 180.2 M406.7 163.1 L408.5 161.6 L412.9 160.6 L415.2 160.8 L417.6 163.1 M405.1 165.1 L408.2 166.5 L411.3 168.4 L412.9 167.8 L416.8 174.3 L414.1 175.4 L413.2 175.0 L408.7 176.2 L409.6 179.1 M414.1 175.4 L416.8 174.3 L416.8 178.2 L414.5 179.1 L412.1 181.2 M408.2 166.5 L406.7 169.8 L409.0 168.9 L411.3 168.4 M405.3 187.5 L406.8 188.4 L408.4 187.8 M363.8 130.3 L373.9 125.2 L374.4 118.7 L382.5 114.2 L386.1 109.1 L402.0 102.2 L408.2 103.9 L420.7 109.1 M386.1 109.1 L391.1 118.3 L398.9 123.7 L412.9 126.0 L420.7 123.5 L423.8 118.7 M321.6 111.0 L323.2 106.7 L328.7 102.9 L334.9 104.7 L344.3 104.7 L344.3 97.0 L356.7 93.5 L359.9 96.5 L369.2 98.3 L373.9 105.2 L382.5 108.1 L385.3 109.3 M321.6 111.0 L325.5 115.4 M331.0 125.6 L336.5 126.6 L336.5 118.7 L340.5 117.6 L344.3 120.2 L352.1 127.2 L355.2 127.2 L359.1 124.7 L363.8 124.1 L373.9 125.2 M359.1 124.7 L359.9 128.7 L363.8 130.3 M294.3 46.8 L293.6 49.8 L295.9 52.3 L295.1 64.7 L298.2 70.3 L292.5 78.2 M267.0 82.8 L268.1 76.6 L268.1 69.9 L270.9 64.7 L272.5 58.3 L274.8 51.1 L280.3 46.8 L281.9 45.5 L288.1 46.8 L291.2 42.4 L294.3 46.8 M286.5 59.8 L285.8 51.9 L281.9 45.5 M292.8 81.3 L292.0 87.3 L293.1 91.0 L297.3 92.7 L297.5 99.6 L299.8 101.4 L302.1 101.4 L304.5 106.2 L311.5 108.1 L311.2 112.4 L308.7 114.0 M281.9 93.5 L284.7 90.4 L289.7 91.0 L293.1 91.0 M282.0 91.3 L287.0 90.7 L292.0 87.3 M287.2 86.1 L292.0 87.3 M285.0 96.2 L288.9 96.5 L290.6 92.7 L293.1 91.0 M285.0 96.2 L286.5 102.2 L286.5 105.9 L284.2 109.5 L278.7 108.4 L272.5 104.7 M286.5 102.2 L296.7 103.7 L297.5 99.6 M284.2 109.5 L283.7 111.4 L290.4 111.2 L293.1 117.6 L295.4 118.0 M290.4 111.2 L295.9 115.6 M246.3 122.2 L253.9 124.3 M253.0 104.4 L258.5 108.4 L261.9 109.5 L261.0 112.8 L258.5 116.0 L260.0 116.9 L260.8 121.3 M271.4 97.3 L272.5 104.7 L268.0 106.4 L270.6 110.0 L269.4 113.1 L264.1 113.1 L261.0 112.8 M258.5 108.4 L258.6 105.2 L260.0 98.8 M254.4 103.7 L258.6 105.2 M270.6 110.0 L275.6 110.3 L278.7 108.4 M275.6 110.3 L274.2 114.4 L270.5 115.4 L270.3 117.4 M264.1 113.1 L265.5 114.4 L270.5 115.4 M258.5 116.0 L265.5 114.4 M283.7 111.4 L280.8 116.0 L278.4 116.7 L274.2 114.4 M280.8 116.0 L284.5 119.8 L284.0 124.5 L281.2 127.2 L279.4 125.4 M284.5 119.8 L293.6 121.5 M284.0 124.5 L289.7 125.8 L292.8 125.2 M281.2 127.2 L280.6 129.9 M289.7 125.8 L289.7 127.7 M235.1 125.4 L239.0 125.4 L238.2 133.3 L237.6 134.9" fill="none" stroke="#9aa39c" stroke-width=".5" opacity=".7" clip-path="url(#lc)"/>
<path d="M0 197.5H420" stroke="#ba625c" stroke-width="1" stroke-dasharray="5.500 2.800" fill="none" opacity=".85"/>
<path d="M0 187.200H7L9.500 194L15.500 203V213.200H0" stroke="#ba625c" stroke-width="1" stroke-dasharray="5 2.800" fill="none" opacity=".9"/>
<text x="77.4" y="118.5" textLength="38.5" lengthAdjust="spacingAndGlyphs" font-size="11" font-weight="normal" fill="#2e2e2e" stroke="#ffffff" stroke-width="2.2" stroke-linejoin="round" style="font-style:italic;paint-order:stroke fill">NORTH</text>
<text x="72.3" y="128.4" textLength="50" lengthAdjust="spacingAndGlyphs" font-size="11" font-weight="normal" fill="#2e2e2e" stroke="#ffffff" stroke-width="2.2" stroke-linejoin="round" style="font-style:italic;paint-order:stroke fill">AMERICA</text>
<text x="255.7" y="114.5" textLength="39.2" lengthAdjust="spacingAndGlyphs" font-size="11" font-weight="normal" fill="#2e2e2e" stroke="#ffffff" stroke-width="2.2" stroke-linejoin="round" style="font-style:italic;paint-order:stroke fill">EUROPE</text>
<text x="254.1" y="171.8" textLength="35.3" lengthAdjust="spacingAndGlyphs" font-size="11" font-weight="normal" fill="#2e2e2e" stroke="#ffffff" stroke-width="2.2" stroke-linejoin="round" style="font-style:italic;paint-order:stroke fill">AFRICA</text>
<text x="146.1" y="213.1" textLength="34.2" lengthAdjust="spacingAndGlyphs" font-size="11" font-weight="normal" fill="#2e2e2e" stroke="#ffffff" stroke-width="2.2" stroke-linejoin="round" style="font-style:italic;paint-order:stroke fill">SOUTH</text>
<text x="140.2" y="223.0" textLength="46" lengthAdjust="spacingAndGlyphs" font-size="11" font-weight="normal" fill="#2e2e2e" stroke="#ffffff" stroke-width="2.2" stroke-linejoin="round" style="font-style:italic;paint-order:stroke fill">AMERICA</text>
<text x="399.8" y="91.0" textLength="7" lengthAdjust="spacingAndGlyphs" font-size="11" font-weight="normal" fill="#2e2e2e" stroke="#ffffff" stroke-width="2.2" stroke-linejoin="round" style="font-style:italic;paint-order:stroke fill">A</text>
<text x="166.5" y="146.3" textLength="32.6" lengthAdjust="spacingAndGlyphs" font-size="10.3" font-weight="normal" fill="#3d8fc4" stroke="#a4dcf9" stroke-width="1.2" stroke-linejoin="round" style="paint-order:stroke fill">Atlantic</text>
<text x="169.7" y="156.0" textLength="26.7" lengthAdjust="spacingAndGlyphs" font-size="10.3" font-weight="normal" fill="#3d8fc4" stroke="#a4dcf9" stroke-width="1.2" stroke-linejoin="round" style="paint-order:stroke fill">Ocean</text>
<text x="7.500" y="210.800" textLength="67.500" lengthAdjust="spacingAndGlyphs" font-size="22.500" fill="none" stroke="#7f98a6" stroke-width="1.900" stroke-linejoin="round" opacity=".75">Google</text>
<text x="7.500" y="210.800" textLength="67.500" lengthAdjust="spacingAndGlyphs" font-size="22.500" fill="#fff" stroke="#fff" stroke-width=".550" stroke-linejoin="round">Google</text>
<rect x="241" y="203.400" width="96.500" height="14.600" fill="#f5f5f5" opacity=".75"/><rect x="339.500" y="203.400" width="81" height="14.600" fill="#f5f5f5" opacity=".75"/>
<text x="247.800" y="215" textLength="83.600" lengthAdjust="spacingAndGlyphs" font-size="10.800" fill="#444">Map data ©2018</text>

<text x="345.500" y="215" textLength="70" lengthAdjust="spacingAndGlyphs" font-size="10.800" fill="#444">Terms of Use</text>
</svg></div>
<div class="a" style="left:1189.500px;top:119.5px;width:34.500px;height:34.500px;background:#fff;border-radius:4px;box-shadow:0 1px 4px rgba(0,0,0,.3);"></div>
<div class="a" style="left:1189.500px;top:167.5px;width:34.500px;height:34.500px;background:#fff;border-radius:4px;box-shadow:0 1px 4px rgba(0,0,0,.3);"></div>
<svg class="ic" style="left:1200px;top:130px;width:14px;height:14px" viewBox="0 0 14 14"><path d="M1.500 7h11M7 1.500v11" stroke="#555" stroke-width="1.100"/></svg>
<svg class="ic" style="left:1200px;top:178px;width:14px;height:14px" viewBox="0 0 14 14"><path d="M1.500 7h11" stroke="#555" stroke-width="1.100"/></svg>
<div class="a" style="left:843.700px;top:267.700px;width:34.500px;height:34.500px;background:#fff;border-radius:4px;box-shadow:0 1px 4px rgba(0,0,0,.3);"></div>
<svg class="ic" style="left:852.30px;top:276.50px;width:17.4px;height:17.4px;opacity:1;" viewBox="0 0 24 24"><path fill="#606060" d="M17.9 17.39c-.26-.8-1.01-1.39-1.9-1.39h-1v-3a1 1 0 0 0-1-1H8v-2h2a1 1 0 0 0 1-1V7h2a2 2 0 0 0 2-2v-.41a7.984 7.984 0 0 1 2.9 12.8M11 19.93c-3.95-.49-7-3.85-7-7.93 0-.62.08-1.22.21-1.79L9 15v1a2 2 0 0 0 2 2m1-16A10 10 0 0 0 2 12a10 10 0 0 0 10 10 10 10 0 0 0 10-10A10 10 0 0 0 12 2"/></svg>
<div class="a" style="left:922px;top:213.200px;width:19px;height:19px;border:5px solid #0095db;border-radius:50%;background:#fff;"></div>
<svg class="ic" style="left:1117px;top:155.300px;width:28.400px;height:38.600px" viewBox="0 0 28.400 38.600"><path d="M14.200 0C6.300 0 .2 6 .2 13.600c0 6.600 5 11.800 9 17l5 7.800 5-7.800c4-5.200 9-10.400 9-17C28.200 6 22.100 0 14.200 0z" fill="#009688"/><circle cx="14.200" cy="13.500" r="10.300" fill="#fff"/></svg>
<div class="a" style="left:1165px;top:289.500px;width:61px;height:61px;border-radius:50%;background:#0095db;box-shadow:0 3px 6px rgba(0,0,0,.28);"></div>
<svg class="ic" style="left:1183.00px;top:307.70px;width:25px;height:25px;opacity:1;" viewBox="0 0 24 24"><path fill="#fff" d="M20.71 7.04c.39-.39.39-1.04 0-1.41l-2.34-2.34c-.37-.39-1.02-.39-1.41 0l-1.84 1.83 3.75 3.75M3 17.25V21h3.75L17.81 9.93l-3.75-3.75z"/></svg>
<div class="a" style="left:1234px;top:326px;width:4px;height:124px;border-radius:2px;background:#e2e2e6;"></div>
<span class="t" id="assignee" style="left:841.70px;top:332.29px;font-size:13.6px;color:#7b7b7b;letter-spacing:-0.419px;">Assignee</span>
<div class="av" style="left:858.400px;top:356.200px;border-color:#009688;"><svg viewBox="0 0 40 40" width="40" height="40" style="position:absolute;left:0;top:0"><rect width="40" height="40" fill="#fdfdfd"/><path d="M11 38L15 33.500L24 36L31.500 33L34.500 30.500L37 33.500L31 41H15Z" fill="#3a302f"/><ellipse cx="21.800" cy="22.300" rx="10" ry="13.200" transform="rotate(-20 21.800 22.300)" fill="#efb3a1"/><path d="M15.500 28.500C19 32 25 32.500 29.500 28L31 22.500C28.500 27 22 29 15.500 25.500Z" fill="#c08673" opacity=".7"/><path d="M6.500 22.100L5.700 13.100L9 5.700L16.400 1.200L24.500 2L31.100 9L34 17.200L32.300 18.800L29.500 13.900L26.200 9.800L22.100 9L18 13.900L13.900 18L10.600 20.500L9 24.500Z" fill="#50291b" stroke="#50291b" stroke-width="1" stroke-linejoin="round"/><path d="M20.500 19.800L24 19.200M27.500 17.600L30 16.600" stroke="#4e2d22" stroke-width="1.200"/></svg>
</div>
<span class="t" id="p_name" style="left:920.70px;top:358.67px;font-size:15.86px;color:#3d4d5c;letter-spacing:0.237px;-webkit-text-stroke:.3px #3d4d5c;">Felix Anderson</span>
<span class="t" id="p_car" style="left:920.70px;top:382.49px;font-size:13.6px;color:#7b7b7b;letter-spacing:-0.001px;">Toyota 978</span>
<div class="a" style="left:1201.500px;top:383px;width:0;height:0;border:5.500px solid transparent;border-top:6px solid #666;border-bottom:0;"></div>
<div class="a" style="left:824px;top:425px;width:419px;height:2px;background:#e6e6ea;"></div>
<span class="t" id="p_label" style="left:841.50px;top:438.89px;font-size:13.6px;color:#7b7b7b;letter-spacing:-0.315px;">Label</span>
<span class="t" id="p_dp" style="left:841.50px;top:464.27px;font-size:15.86px;color:#222;letter-spacing:0.427px;-webkit-text-stroke:.35px #222;">Deliver products</span>
<div class="a" style="left:824px;top:505.500px;width:419px;height:1.500px;background:#e6e6ea;"></div>
<span class="t" id="p_desc" style="left:841.50px;top:522.99px;font-size:13.6px;color:#7b7b7b;letter-spacing:0.100px;">Description</span>
<span class="t" id="p_dtext" style="left:841.50px;top:548.07px;font-size:15.86px;color:#333;letter-spacing:0.132px;">Deliver the goods to the store</span>
<div class="a" style="left:824px;top:583.500px;width:419px;height:1px;background:#e0e0e4;"></div>
</div></body></html>
